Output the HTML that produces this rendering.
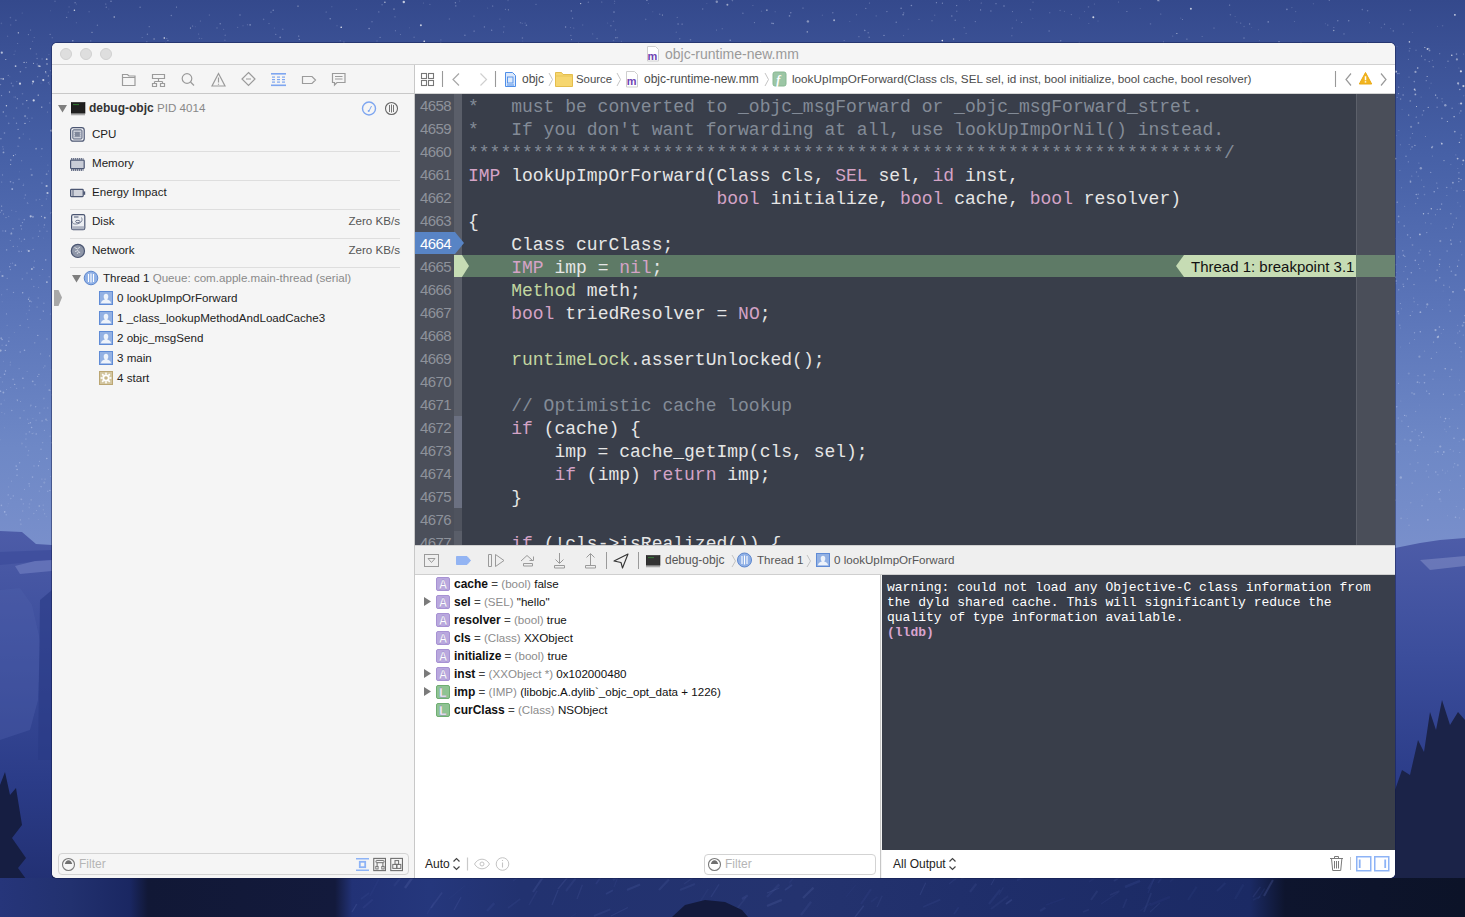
<!DOCTYPE html>
<html><head><meta charset="utf-8">
<style>
*{margin:0;padding:0;box-sizing:border-box}
html,body{width:1465px;height:917px;overflow:hidden}
body{position:relative;font-family:"Liberation Sans",sans-serif;font-size:12px;color:#222;
background:linear-gradient(180deg,#33468a 0px,#374c90 200px,#4a5fa6 400px,#6678bb 540px,#5566ac 600px,#2c3a80 760px,#16204e 917px)}
.abs{position:absolute}
#win{position:absolute;left:52px;top:43px;width:1343px;height:835px;border-radius:5px;overflow:hidden;background:#f5f5f5;box-shadow:0 0 0 1px rgba(15,25,70,0.45)}
#title{position:absolute;left:0;top:0;width:1343px;height:22px;background:#f5f5f5;border-bottom:1px solid #d1d1d1}
.tl{position:absolute;top:5px;width:12px;height:12px;border-radius:6px;background:#dedede;border:1px solid #d0d0d0}
#sidebar{position:absolute;left:0;top:22px;width:363px;height:813px;background:#f5f5f5;border-right:1px solid #c8c8c8}
#navbar{position:absolute;left:0;top:0;width:362px;height:29px;border-bottom:1px solid #c8c8c8}
#jump{position:absolute;left:363px;top:22px;width:980px;height:29px;background:#fff;border-bottom:1px solid #d4d4d4}
#editor{position:absolute;left:363px;top:51px;width:980px;height:451px;background:#393e4a;overflow:hidden}
#gutter{position:absolute;left:0;top:0;width:39px;height:452px;background:#4b4f5a}
#fold{position:absolute;left:39px;top:0;width:8px;height:452px;background:#5a5e69}
#scroll{position:absolute;left:941px;top:0;width:39px;height:452px;background:#4a4e59;border-left:1px solid #5c606a}
.ln{position:absolute;left:0;margin-top:0px;width:36px;text-align:right;font-family:"Liberation Sans",sans-serif;font-size:15px;letter-spacing:-0.6px;color:#8e929b;height:23px;line-height:23px}
.code{position:absolute;left:53px;margin-top:2px;font-family:"Liberation Mono",monospace;font-size:18px;height:23px;line-height:23px;white-space:pre;color:#e6e6e6}
.cm{color:#838b97}.kw{color:#d4a3c6}.ty{color:#c2d6a0}
#dbar{position:absolute;left:363px;top:502px;width:980px;height:30px;background:#efefef;border-top:1px solid #d0d0d0;border-bottom:1px solid #cfcfcf}
#vars{position:absolute;left:363px;top:532px;width:466px;height:303px;background:#fff;border-right:1px solid #c6c6c6}
#console{position:absolute;left:830px;top:532px;width:513px;height:275px;background:#393e4a}
#cbar{position:absolute;left:830px;top:807px;width:513px;height:28px;background:#fff}
.mono13{font-family:"Liberation Mono",monospace;font-size:13px;line-height:15px;color:#fff;white-space:pre}
.sbi{position:absolute;left:40px;font-size:12px;color:#1a1a1a}
.sep{position:absolute;left:18px;width:330px;height:1px;background:#dcdcdc}
</style></head>
<body>
<svg id="wall" class="abs" style="left:0;top:0" width="1465" height="917">
<defs>
<linearGradient id="sky" x1="0" y1="0" x2="0" y2="560" gradientUnits="userSpaceOnUse"><stop offset="0" stop-color="#34498c"/><stop offset="0.08" stop-color="#3a5094"/><stop offset="0.27" stop-color="#4660a6"/><stop offset="0.54" stop-color="#5a74b8"/><stop offset="0.8" stop-color="#6e88c6"/><stop offset="1" stop-color="#7a90cc"/></linearGradient>
<linearGradient id="mtn" x1="0" y1="0" x2="0" y2="1"><stop offset="0" stop-color="#4d5ca8"/><stop offset="0.3" stop-color="#3c4e9c"/><stop offset="0.65" stop-color="#2b3c88"/><stop offset="1" stop-color="#1f2c6c"/></linearGradient>
<linearGradient id="bot" x1="0" y1="0" x2="1465" y2="0" gradientUnits="userSpaceOnUse"><stop offset="0.0000" stop-color="#26357a"/><stop offset="0.0478" stop-color="#22316f"/><stop offset="0.0887" stop-color="#1a2762"/><stop offset="0.1010" stop-color="#111836"/><stop offset="0.2287" stop-color="#131a3c"/><stop offset="0.2403" stop-color="#223276"/><stop offset="0.2935" stop-color="#25377c"/><stop offset="0.3549" stop-color="#223270"/><stop offset="0.5461" stop-color="#24336f"/><stop offset="0.6826" stop-color="#1f2e6a"/><stop offset="0.8532" stop-color="#1b2a64"/><stop offset="0.8771" stop-color="#0e152e"/><stop offset="1.0000" stop-color="#0c1328"/></linearGradient>
</defs>
<rect x="0" y="0" width="1465" height="560" fill="url(#sky)"/>
<polygon points="0,531 22,532 36,544 52,545 52,917 0,917" fill="url(#mtn)"/>
<polygon points="0,552 52,550 52,560 0,565" fill="#3a4a9a" fill-opacity="0.6"/>
<polygon points="0,590 20,588 32,605 40,640 38,700 30,730 0,740" fill="#4d5eab" fill-opacity="0.4"/>
<polygon points="40,600 52,590 52,760 38,760" fill="#2a3a86" fill-opacity="0.6"/>
<polygon points="1395,548 1420,543 1440,540 1465,538 1465,917 1395,917" fill="url(#mtn)"/>
<polygon points="15,566 35,561 52,560 52,571 20,574" fill="#7482c4" fill-opacity="0.6"/>
<polygon points="1420,560 1465,556 1465,566 1430,570" fill="#8a95cc" fill-opacity="0.5"/>
<polygon points="0,785 5,772 10,795 16,788 22,825 12,838 26,858 18,868 34,890 38,917 0,917" fill="#161e42"/>
<polygon points="1395,790 1402,770 1410,775 1418,740 1424,752 1430,712 1436,730 1442,700 1450,725 1458,712 1465,720 1465,917 1395,917" fill="#1b2348"/>
<rect x="0" y="878" width="1465" height="39" fill="url(#bot)"/>
<path d="M923 907l17.3 -7.3" stroke="#3a4a92" stroke-opacity="0.24" stroke-width="1.8"/>
<path d="M1123 908l3.8 -9.2" stroke="#5565a8" stroke-opacity="0.14" stroke-width="1.7"/>
<path d="M577 899l5.4 -14.2" stroke="#5565a8" stroke-opacity="0.19" stroke-width="1.3"/>
<path d="M1148 893l7.3 -16.7" stroke="#3a4a92" stroke-opacity="0.23" stroke-width="1.2"/>
<path d="M352 912l4.8 -8.0" stroke="#5565a8" stroke-opacity="0.28" stroke-width="1.4"/>
<path d="M1235 899l8.5 -14.6" stroke="#3a4a92" stroke-opacity="0.16" stroke-width="2.4"/>
<path d="M703 879l11.6 -5.0" stroke="#4a5aa0" stroke-opacity="0.13" stroke-width="1.5"/>
<path d="M905 878l10.1 -13.5" stroke="#4a5aa0" stroke-opacity="0.19" stroke-width="1.5"/>
<path d="M991 885l6.5 -11.9" stroke="#4a5aa0" stroke-opacity="0.29" stroke-width="1.0"/>
<path d="M1040 911l5.4 -3.2" stroke="#4a5aa0" stroke-opacity="0.19" stroke-width="2.3"/>
<path d="M767 906l14.8 -6.1" stroke="#5565a8" stroke-opacity="0.26" stroke-width="2.4"/>
<path d="M1217 891l8.4 -8.1" stroke="#4a5aa0" stroke-opacity="0.14" stroke-width="2.1"/>
<path d="M1083 912l6.1 -2.5" stroke="#5565a8" stroke-opacity="0.16" stroke-width="1.8"/>
<path d="M684 884l8.5 -6.0" stroke="#5565a8" stroke-opacity="0.17" stroke-width="1.5"/>
<path d="M513 881l6.8 -4.9" stroke="#4a5aa0" stroke-opacity="0.15" stroke-width="1.1"/>
<path d="M1258 899l6.6 -10.6" stroke="#3a4a92" stroke-opacity="0.18" stroke-width="1.4"/>
<path d="M949 884l17.1 -13.4" stroke="#4a5aa0" stroke-opacity="0.18" stroke-width="1.3"/>
<path d="M1253 900l7.4 -3.5" stroke="#4a5aa0" stroke-opacity="0.14" stroke-width="1.7"/>
<path d="M487 911l7.3 -7.9" stroke="#3a4a92" stroke-opacity="0.28" stroke-width="2.5"/>
<path d="M767 897l12.3 -12.7" stroke="#4a5aa0" stroke-opacity="0.20" stroke-width="2.4"/>
<path d="M454 910l7.0 -12.7" stroke="#4a5aa0" stroke-opacity="0.28" stroke-width="1.3"/>
<path d="M803 898l10.5 -10.4" stroke="#5565a8" stroke-opacity="0.26" stroke-width="2.2"/>
<path d="M989 904l11.2 -14.3" stroke="#3a4a92" stroke-opacity="0.24" stroke-width="2.3"/>
<path d="M594 916l16.2 -6.6" stroke="#4a5aa0" stroke-opacity="0.23" stroke-width="1.9"/>
<path d="M361 899l8.1 -5.9" stroke="#4a5aa0" stroke-opacity="0.17" stroke-width="1.8"/>
<path d="M970 892l6.3 -8.3" stroke="#4a5aa0" stroke-opacity="0.19" stroke-width="2.3"/>
<path d="M1150 905l20.0 -8.2" stroke="#3a4a92" stroke-opacity="0.14" stroke-width="2.5"/>
<path d="M533 892l11.0 -16.3" stroke="#5565a8" stroke-opacity="0.25" stroke-width="2.1"/>
<path d="M508 908l12.3 -9.1" stroke="#4a5aa0" stroke-opacity="0.17" stroke-width="1.8"/>
<path d="M1148 889l10.9 -19.0" stroke="#3a4a92" stroke-opacity="0.20" stroke-width="2.0"/>
<path d="M552 905l6.1 -14.9" stroke="#4a5aa0" stroke-opacity="0.29" stroke-width="1.2"/>
<path d="M1170 882l15.0 -15.4" stroke="#3a4a92" stroke-opacity="0.13" stroke-width="1.7"/>
<path d="M700 902l8.2 -13.1" stroke="#4a5aa0" stroke-opacity="0.12" stroke-width="1.6"/>
<path d="M606 894l6.9 -3.7" stroke="#4a5aa0" stroke-opacity="0.29" stroke-width="1.8"/>
<path d="M627 890l13.1 -5.4" stroke="#4a5aa0" stroke-opacity="0.29" stroke-width="2.2"/>
<path d="M736 910l10.1 -12.7" stroke="#5565a8" stroke-opacity="0.15" stroke-width="1.6"/>
<path d="M789 886l3.4 -7.4" stroke="#3a4a92" stroke-opacity="0.12" stroke-width="1.2"/>
<path d="M871 902l6.5 -5.1" stroke="#3a4a92" stroke-opacity="0.19" stroke-width="1.6"/>
<path d="M558 889l13.6 -16.8" stroke="#5565a8" stroke-opacity="0.23" stroke-width="1.4"/>
<path d="M1253 897l7.4 -10.2" stroke="#4a5aa0" stroke-opacity="0.21" stroke-width="1.4"/>
<path d="M789 883l10.7 -11.8" stroke="#4a5aa0" stroke-opacity="0.13" stroke-width="1.2"/>
<path d="M711 897l8.0 -12.7" stroke="#4a5aa0" stroke-opacity="0.26" stroke-width="1.4"/>
<path d="M596 884l12.4 -17.9" stroke="#3a4a92" stroke-opacity="0.30" stroke-width="1.8"/>
<path d="M1144 912l7.2 -19.0" stroke="#5565a8" stroke-opacity="0.17" stroke-width="1.8"/>
<path d="M659 890l9.9 -10.6" stroke="#4a5aa0" stroke-opacity="0.24" stroke-width="2.2"/>
<path d="M472 878l12.1 -8.7" stroke="#5565a8" stroke-opacity="0.28" stroke-width="1.8"/>
<path d="M363 908l9.7 -8.5" stroke="#3a4a92" stroke-opacity="0.29" stroke-width="2.0"/>
<path d="M1140 911l11.0 -8.0" stroke="#3a4a92" stroke-opacity="0.16" stroke-width="1.4"/>
<path d="M1114 881l15.8 -11.2" stroke="#4a5aa0" stroke-opacity="0.22" stroke-width="2.0"/>
<path d="M785 890l7.1 -5.0" stroke="#4a5aa0" stroke-opacity="0.29" stroke-width="1.8"/>
<path d="M742 899l5.7 -3.7" stroke="#4a5aa0" stroke-opacity="0.27" stroke-width="2.2"/>
<path d="M961 879l16.4 -6.3" stroke="#4a5aa0" stroke-opacity="0.25" stroke-width="1.1"/>
<path d="M1125 887l15.1 -6.2" stroke="#3a4a92" stroke-opacity="0.28" stroke-width="2.5"/>
<path d="M999 895l4.4 -7.8" stroke="#5565a8" stroke-opacity="0.13" stroke-width="1.3"/>
<path d="M861 904l10.0 -14.9" stroke="#3a4a92" stroke-opacity="0.22" stroke-width="2.1"/>
<path d="M1158 883l7.5 -10.5" stroke="#3a4a92" stroke-opacity="0.21" stroke-width="1.5"/>
<path d="M954 914l4.7 -6.7" stroke="#3a4a92" stroke-opacity="0.23" stroke-width="1.8"/>
<path d="M1188 900l8.7 -13.3" stroke="#3a4a92" stroke-opacity="0.16" stroke-width="2.2"/>
<path d="M611 916l16.9 -8.5" stroke="#4a5aa0" stroke-opacity="0.25" stroke-width="1.3"/>
<path d="M1006 904l5.9 -4.4" stroke="#5565a8" stroke-opacity="0.28" stroke-width="1.8"/>
<path d="M767 893l12.4 -5.0" stroke="#5565a8" stroke-opacity="0.26" stroke-width="1.0"/>
<path d="M1017 880l7.8 -3.2" stroke="#3a4a92" stroke-opacity="0.26" stroke-width="2.1"/>
<path d="M427 914l7.1 -11.9" stroke="#3a4a92" stroke-opacity="0.23" stroke-width="1.5"/>
<path d="M566 891l9.6 -12.6" stroke="#4a5aa0" stroke-opacity="0.19" stroke-width="2.1"/>
<path d="M680 890l14.9 -6.0" stroke="#4a5aa0" stroke-opacity="0.22" stroke-width="1.9"/>
<path d="M877 907l5.2 -11.2" stroke="#5565a8" stroke-opacity="0.16" stroke-width="1.3"/>
<path d="M801 915l10.1 -13.2" stroke="#4a5aa0" stroke-opacity="0.20" stroke-width="2.3"/>
<path d="M920 895l5.7 -12.2" stroke="#5565a8" stroke-opacity="0.24" stroke-width="1.1"/>
<path d="M1150 912l10.0 -9.1" stroke="#5565a8" stroke-opacity="0.17" stroke-width="1.2"/>
<path d="M614 887l5.0 -12.7" stroke="#4a5aa0" stroke-opacity="0.17" stroke-width="1.1"/>
<path d="M370 896l9.1 -17.3" stroke="#3a4a92" stroke-opacity="0.18" stroke-width="1.7"/>
<path d="M571 917l5.4 -3.7" stroke="#3a4a92" stroke-opacity="0.16" stroke-width="1.1"/>
<path d="M719 916l6.9 -9.6" stroke="#4a5aa0" stroke-opacity="0.19" stroke-width="1.1"/>
<path d="M1264 896l8.9 -16.1" stroke="#5565a8" stroke-opacity="0.29" stroke-width="2.0"/>
<path d="M746 916l2.4 -5.6" stroke="#3a4a92" stroke-opacity="0.19" stroke-width="1.1"/>
<path d="M855 917l8.7 -11.3" stroke="#5565a8" stroke-opacity="0.25" stroke-width="1.4"/>
<path d="M1089 882l11.0 -7.9" stroke="#3a4a92" stroke-opacity="0.13" stroke-width="1.6"/>
<path d="M405 888l7.2 -10.2" stroke="#5565a8" stroke-opacity="0.28" stroke-width="2.4"/>
<path d="M529 905l8.0 -14.2" stroke="#5565a8" stroke-opacity="0.14" stroke-width="1.5"/>
<path d="M449 899l15.9 -13.4" stroke="#3a4a92" stroke-opacity="0.16" stroke-width="1.0"/>
<path d="M846 897l9.5 -11.8" stroke="#3a4a92" stroke-opacity="0.14" stroke-width="1.0"/>
<path d="M1046 905l19.0 -6.9" stroke="#3a4a92" stroke-opacity="0.14" stroke-width="1.5"/>
<path d="M431 908l11.1 -15.5" stroke="#5565a8" stroke-opacity="0.22" stroke-width="1.7"/>
<path d="M991 909l17.2 -12.8" stroke="#4a5aa0" stroke-opacity="0.13" stroke-width="2.1"/>
<path d="M394 886l6.6 -8.3" stroke="#5565a8" stroke-opacity="0.13" stroke-width="2.2"/>
<path d="M699 908l3.4 -5.0" stroke="#5565a8" stroke-opacity="0.22" stroke-width="1.7"/>
<path d="M1101 904l17.7 -11.8" stroke="#3a4a92" stroke-opacity="0.20" stroke-width="1.2"/>
<path d="M1091 900l6.4 -9.1" stroke="#5565a8" stroke-opacity="0.17" stroke-width="2.0"/>
<path d="M613 880l13.5 -12.2" stroke="#5565a8" stroke-opacity="0.14" stroke-width="2.5"/>
<path d="M1110 895l9.4 -3.9" stroke="#5565a8" stroke-opacity="0.16" stroke-width="1.6"/>
<polygon points="672,917 685,905 705,900 725,902 742,910 748,917" fill="#131a3c"/>
<circle cx="953.6" cy="39.1" r="0.8" fill="#fff" fill-opacity="0.38"/><circle cx="807.3" cy="31.9" r="0.8" fill="#fff" fill-opacity="0.40"/><circle cx="92.0" cy="32.2" r="0.5" fill="#fff" fill-opacity="0.62"/><circle cx="1409.4" cy="41.9" r="0.8" fill="#fff" fill-opacity="0.65"/><circle cx="33.1" cy="249.3" r="0.5" fill="#fff" fill-opacity="0.46"/><circle cx="1445.2" cy="368.7" r="0.7" fill="#fff" fill-opacity="0.44"/><circle cx="384.9" cy="2.2" r="0.7" fill="#fff" fill-opacity="0.67"/><circle cx="1399.8" cy="325.2" r="0.7" fill="#fff" fill-opacity="0.23"/><circle cx="33.8" cy="513.5" r="0.8" fill="#fff" fill-opacity="0.15"/><circle cx="1449.8" cy="426.7" r="0.7" fill="#fff" fill-opacity="0.20"/><circle cx="1447.5" cy="515.7" r="0.6" fill="#fff" fill-opacity="0.10"/><circle cx="1443.4" cy="329.5" r="0.5" fill="#fff" fill-opacity="0.34"/><circle cx="1423.5" cy="213.8" r="0.7" fill="#fff" fill-opacity="0.55"/><circle cx="1454.9" cy="14.9" r="0.8" fill="#fff" fill-opacity="0.87"/><circle cx="20.9" cy="524.3" r="1.0" fill="#fff" fill-opacity="0.10"/><circle cx="1445.3" cy="105.2" r="1.2" fill="#fff" fill-opacity="0.40"/><circle cx="766.9" cy="10.1" r="0.7" fill="#fff" fill-opacity="0.80"/><circle cx="662.4" cy="15.0" r="0.5" fill="#fff" fill-opacity="0.60"/><circle cx="1450.2" cy="449.5" r="0.5" fill="#fff" fill-opacity="0.28"/><circle cx="1456.3" cy="218.1" r="0.7" fill="#fff" fill-opacity="0.32"/><circle cx="28.5" cy="299.2" r="0.7" fill="#fff" fill-opacity="0.44"/><circle cx="394.0" cy="9.1" r="0.5" fill="#fff" fill-opacity="0.82"/><circle cx="508.4" cy="9.8" r="0.6" fill="#fff" fill-opacity="0.37"/><circle cx="27.0" cy="273.1" r="0.5" fill="#fff" fill-opacity="0.40"/><circle cx="1438.5" cy="452.0" r="0.5" fill="#fff" fill-opacity="0.14"/><circle cx="1409.0" cy="525.2" r="0.8" fill="#fff" fill-opacity="0.14"/><circle cx="50.5" cy="476.5" r="0.5" fill="#fff" fill-opacity="0.18"/><circle cx="1.6" cy="206.1" r="0.7" fill="#fff" fill-opacity="0.37"/><circle cx="1190.9" cy="8.7" r="1.0" fill="#fff" fill-opacity="0.69"/><circle cx="45.7" cy="71.9" r="0.6" fill="#fff" fill-opacity="0.83"/><circle cx="74.4" cy="10.2" r="0.8" fill="#fff" fill-opacity="0.75"/><circle cx="716.8" cy="1.8" r="1.2" fill="#fff" fill-opacity="0.39"/><circle cx="420.9" cy="25.2" r="1.0" fill="#fff" fill-opacity="0.71"/><circle cx="18.3" cy="32.8" r="0.6" fill="#fff" fill-opacity="0.89"/><circle cx="424.2" cy="41.3" r="0.8" fill="#fff" fill-opacity="0.88"/><circle cx="1395.8" cy="71.6" r="1.2" fill="#fff" fill-opacity="0.65"/><circle cx="17.2" cy="399.6" r="0.6" fill="#fff" fill-opacity="0.25"/><circle cx="1400.8" cy="477.5" r="1.2" fill="#fff" fill-opacity="0.26"/><circle cx="942.3" cy="40.6" r="0.8" fill="#fff" fill-opacity="0.84"/><circle cx="1417.7" cy="68.0" r="0.8" fill="#fff" fill-opacity="0.60"/><circle cx="1418.5" cy="264.5" r="0.5" fill="#fff" fill-opacity="0.36"/><circle cx="807.9" cy="21.4" r="1.2" fill="#fff" fill-opacity="0.41"/><circle cx="834.1" cy="20.3" r="1.0" fill="#fff" fill-opacity="0.52"/><circle cx="164.3" cy="38.0" r="0.8" fill="#fff" fill-opacity="0.87"/><circle cx="1158.1" cy="0.6" r="0.8" fill="#fff" fill-opacity="0.53"/><circle cx="31.9" cy="269.1" r="1.0" fill="#fff" fill-opacity="0.45"/><circle cx="580.7" cy="3.6" r="0.6" fill="#fff" fill-opacity="0.79"/><circle cx="1420.8" cy="168.3" r="1.2" fill="#fff" fill-opacity="0.35"/><circle cx="1333.7" cy="30.5" r="0.8" fill="#fff" fill-opacity="0.42"/><circle cx="1427.1" cy="76.6" r="0.5" fill="#fff" fill-opacity="0.69"/><circle cx="165.8" cy="42.9" r="0.5" fill="#fff" fill-opacity="0.51"/><circle cx="1093.3" cy="17.2" r="1.0" fill="#fff" fill-opacity="0.77"/><circle cx="1176.9" cy="33.5" r="0.5" fill="#fff" fill-opacity="0.76"/><circle cx="403.8" cy="2.0" r="1.2" fill="#fff" fill-opacity="0.71"/><circle cx="727.4" cy="4.7" r="1.0" fill="#fff" fill-opacity="0.53"/><circle cx="154.1" cy="39.0" r="0.8" fill="#fff" fill-opacity="0.38"/><circle cx="1451.8" cy="55.3" r="0.7" fill="#fff" fill-opacity="0.81"/><circle cx="341.2" cy="27.2" r="0.8" fill="#fff" fill-opacity="0.90"/><circle cx="298.0" cy="6.1" r="0.6" fill="#fff" fill-opacity="0.59"/><circle cx="114.2" cy="17.0" r="0.7" fill="#fff" fill-opacity="0.66"/><circle cx="8.6" cy="486.9" r="0.7" fill="#fff" fill-opacity="0.13"/><circle cx="190.4" cy="27.9" r="0.5" fill="#fff" fill-opacity="0.71"/><circle cx="1416.5" cy="106.6" r="0.5" fill="#fff" fill-opacity="0.72"/><circle cx="47.5" cy="193.0" r="1.1" fill="#fff" fill-opacity="0.60"/><circle cx="47.0" cy="338.9" r="0.6" fill="#fff" fill-opacity="0.33"/><circle cx="1438.5" cy="336.2" r="0.6" fill="#fff" fill-opacity="0.38"/><circle cx="11.3" cy="233.7" r="1.1" fill="#fff" fill-opacity="0.25"/><circle cx="7.8" cy="506.0" r="0.6" fill="#fff" fill-opacity="0.07"/><circle cx="1448.0" cy="61.2" r="0.7" fill="#fff" fill-opacity="0.34"/><circle cx="1433.5" cy="342.1" r="0.7" fill="#fff" fill-opacity="0.33"/><circle cx="13.0" cy="228.7" r="0.7" fill="#fff" fill-opacity="0.37"/><circle cx="1.2" cy="338.2" r="0.9" fill="#fff" fill-opacity="0.28"/><circle cx="32.2" cy="433.6" r="0.6" fill="#fff" fill-opacity="0.26"/><circle cx="3.5" cy="214.0" r="0.7" fill="#fff" fill-opacity="0.24"/><circle cx="26.5" cy="62.4" r="0.6" fill="#fff" fill-opacity="0.32"/><circle cx="1449.4" cy="287.0" r="0.5" fill="#fff" fill-opacity="0.42"/><circle cx="1440.7" cy="417.1" r="0.5" fill="#fff" fill-opacity="0.29"/><circle cx="1446.2" cy="431.7" r="0.6" fill="#fff" fill-opacity="0.13"/><circle cx="1415.2" cy="429.8" r="0.6" fill="#fff" fill-opacity="0.24"/><circle cx="1410.5" cy="440.4" r="1.1" fill="#fff" fill-opacity="0.24"/><circle cx="46.6" cy="174.2" r="0.9" fill="#fff" fill-opacity="0.28"/><circle cx="1459.4" cy="142.4" r="0.7" fill="#fff" fill-opacity="0.52"/><circle cx="19.4" cy="137.9" r="0.9" fill="#fff" fill-opacity="0.31"/><circle cx="1442.6" cy="470.1" r="0.6" fill="#fff" fill-opacity="0.21"/><circle cx="39.9" cy="66.2" r="0.7" fill="#fff" fill-opacity="0.79"/><circle cx="27.1" cy="371.5" r="0.5" fill="#fff" fill-opacity="0.19"/><circle cx="1455.0" cy="395.0" r="0.7" fill="#fff" fill-opacity="0.18"/><circle cx="1435.4" cy="214.8" r="0.5" fill="#fff" fill-opacity="0.38"/><circle cx="38.7" cy="66.0" r="1.1" fill="#fff" fill-opacity="0.41"/><circle cx="1463.9" cy="322.5" r="0.7" fill="#fff" fill-opacity="0.37"/><circle cx="1410.5" cy="181.8" r="0.9" fill="#fff" fill-opacity="0.40"/><circle cx="2.5" cy="276.0" r="1.1" fill="#fff" fill-opacity="0.40"/><circle cx="0.1" cy="212.3" r="0.5" fill="#fff" fill-opacity="0.41"/><circle cx="1423.9" cy="186.7" r="0.6" fill="#fff" fill-opacity="0.30"/><circle cx="1428.2" cy="107.3" r="0.6" fill="#fff" fill-opacity="0.60"/><circle cx="3.3" cy="112.0" r="0.7" fill="#fff" fill-opacity="0.45"/><circle cx="0.6" cy="350.6" r="1.1" fill="#fff" fill-opacity="0.38"/><circle cx="1435.5" cy="330.1" r="1.1" fill="#fff" fill-opacity="0.36"/><circle cx="47.0" cy="64.0" r="1.1" fill="#fff" fill-opacity="0.28"/><circle cx="8.3" cy="477.9" r="0.5" fill="#fff" fill-opacity="0.08"/><circle cx="1460.9" cy="110.9" r="0.6" fill="#fff" fill-opacity="0.51"/><circle cx="1440.3" cy="241.1" r="1.1" fill="#fff" fill-opacity="0.25"/><circle cx="15.6" cy="66.1" r="0.9" fill="#fff" fill-opacity="0.66"/><circle cx="43.9" cy="398.5" r="0.9" fill="#fff" fill-opacity="0.13"/><circle cx="1407.3" cy="518.4" r="0.7" fill="#fff" fill-opacity="0.09"/><circle cx="17.4" cy="400.6" r="0.7" fill="#fff" fill-opacity="0.28"/><circle cx="28.8" cy="251.0" r="1.1" fill="#fff" fill-opacity="0.54"/><circle cx="48.3" cy="469.5" r="0.5" fill="#fff" fill-opacity="0.23"/><circle cx="13.5" cy="155.6" r="0.6" fill="#fff" fill-opacity="0.66"/><circle cx="1417.9" cy="462.8" r="0.7" fill="#fff" fill-opacity="0.19"/><circle cx="44.3" cy="482.6" r="1.1" fill="#fff" fill-opacity="0.15"/><circle cx="1443.8" cy="452.0" r="0.9" fill="#fff" fill-opacity="0.27"/><circle cx="46.0" cy="419.4" r="0.9" fill="#fff" fill-opacity="0.24"/><circle cx="47.4" cy="112.0" r="0.5" fill="#fff" fill-opacity="0.30"/><circle cx="1406.3" cy="509.2" r="0.5" fill="#fff" fill-opacity="0.07"/><circle cx="33.5" cy="63.3" r="0.5" fill="#fff" fill-opacity="0.67"/><circle cx="30.7" cy="216.3" r="1.1" fill="#fff" fill-opacity="0.56"/><circle cx="45.1" cy="479.2" r="0.9" fill="#fff" fill-opacity="0.10"/><circle cx="5.8" cy="59.4" r="0.5" fill="#fff" fill-opacity="0.72"/><circle cx="1415.1" cy="90.6" r="0.5" fill="#fff" fill-opacity="0.67"/><circle cx="1415.6" cy="203.5" r="0.7" fill="#fff" fill-opacity="0.21"/><circle cx="14.7" cy="384.4" r="0.7" fill="#fff" fill-opacity="0.35"/><circle cx="1437.1" cy="270.1" r="0.7" fill="#fff" fill-opacity="0.39"/><circle cx="21.5" cy="251.2" r="0.5" fill="#fff" fill-opacity="0.31"/><circle cx="1432.7" cy="146.3" r="0.5" fill="#fff" fill-opacity="0.50"/><circle cx="22.7" cy="292.7" r="0.7" fill="#fff" fill-opacity="0.42"/><circle cx="1395.3" cy="277.1" r="0.9" fill="#fff" fill-opacity="0.41"/><circle cx="1462.7" cy="325.6" r="1.1" fill="#fff" fill-opacity="0.23"/><circle cx="1414.9" cy="145.4" r="0.6" fill="#fff" fill-opacity="0.46"/><circle cx="33.1" cy="81.6" r="1.1" fill="#fff" fill-opacity="0.68"/><circle cx="1419.9" cy="234.4" r="0.9" fill="#fff" fill-opacity="0.53"/><circle cx="1424.5" cy="351.1" r="0.7" fill="#fff" fill-opacity="0.19"/><circle cx="46.9" cy="282.1" r="0.9" fill="#fff" fill-opacity="0.50"/><circle cx="1461.1" cy="103.5" r="1.1" fill="#fff" fill-opacity="0.63"/><circle cx="1440.2" cy="209.2" r="0.7" fill="#fff" fill-opacity="0.42"/><circle cx="1426.5" cy="307.1" r="0.7" fill="#fff" fill-opacity="0.21"/><circle cx="40.2" cy="319.3" r="0.6" fill="#fff" fill-opacity="0.25"/><circle cx="1443.8" cy="285.2" r="0.7" fill="#fff" fill-opacity="0.27"/><circle cx="1454.1" cy="116.7" r="0.6" fill="#fff" fill-opacity="0.73"/><circle cx="1437.2" cy="209.3" r="0.6" fill="#fff" fill-opacity="0.34"/><circle cx="50.7" cy="390.6" r="0.5" fill="#fff" fill-opacity="0.16"/><circle cx="1408.7" cy="115.0" r="0.6" fill="#fff" fill-opacity="0.64"/><circle cx="1425.4" cy="136.6" r="0.5" fill="#fff" fill-opacity="0.37"/><circle cx="1427.5" cy="49.0" r="0.9" fill="#fff" fill-opacity="0.66"/><circle cx="1439.3" cy="264.0" r="0.6" fill="#fff" fill-opacity="0.27"/><circle cx="1395.4" cy="158.6" r="0.9" fill="#fff" fill-opacity="0.54"/><circle cx="1440.3" cy="446.5" r="1.1" fill="#fff" fill-opacity="0.25"/><circle cx="1439.9" cy="259.5" r="0.7" fill="#fff" fill-opacity="0.27"/><circle cx="1457.6" cy="158.6" r="0.9" fill="#fff" fill-opacity="0.55"/><circle cx="1412.5" cy="245.0" r="0.9" fill="#fff" fill-opacity="0.19"/><circle cx="1431.3" cy="358.3" r="0.6" fill="#fff" fill-opacity="0.38"/><circle cx="0.6" cy="439.8" r="0.5" fill="#fff" fill-opacity="0.10"/><circle cx="1406.3" cy="415.9" r="0.6" fill="#fff" fill-opacity="0.22"/><circle cx="29.9" cy="301.1" r="0.9" fill="#fff" fill-opacity="0.33"/><circle cx="1453.0" cy="291.8" r="0.9" fill="#fff" fill-opacity="0.41"/><circle cx="51.5" cy="130.7" r="1.1" fill="#fff" fill-opacity="0.61"/><circle cx="51.2" cy="212.6" r="0.5" fill="#fff" fill-opacity="0.30"/><circle cx="3.2" cy="78.9" r="0.9" fill="#fff" fill-opacity="0.59"/><circle cx="1435.6" cy="95.1" r="0.7" fill="#fff" fill-opacity="0.64"/><circle cx="1431.9" cy="147.4" r="0.9" fill="#fff" fill-opacity="0.45"/><circle cx="48.3" cy="75.9" r="0.6" fill="#fff" fill-opacity="0.51"/><circle cx="1410.8" cy="502.8" r="0.7" fill="#fff" fill-opacity="0.16"/><circle cx="1450.7" cy="240.1" r="0.7" fill="#fff" fill-opacity="0.48"/><circle cx="1449.6" cy="266.9" r="0.6" fill="#fff" fill-opacity="0.27"/><circle cx="13.2" cy="246.3" r="0.6" fill="#fff" fill-opacity="0.37"/><circle cx="1450.9" cy="213.8" r="0.7" fill="#fff" fill-opacity="0.33"/><circle cx="32.4" cy="83.7" r="0.7" fill="#fff" fill-opacity="0.34"/><circle cx="20.0" cy="83.7" r="1.1" fill="#fff" fill-opacity="0.73"/><circle cx="1404.8" cy="439.5" r="1.1" fill="#fff" fill-opacity="0.10"/><circle cx="49.5" cy="355.9" r="0.7" fill="#fff" fill-opacity="0.30"/><circle cx="1454.8" cy="131.6" r="0.9" fill="#fff" fill-opacity="0.41"/><circle cx="47.0" cy="420.6" r="0.6" fill="#fff" fill-opacity="0.23"/><circle cx="1463.4" cy="86.1" r="1.1" fill="#fff" fill-opacity="0.67"/><circle cx="1408.8" cy="373.5" r="1.1" fill="#fff" fill-opacity="0.15"/><circle cx="1442.0" cy="98.8" r="0.5" fill="#fff" fill-opacity="0.39"/><circle cx="7.2" cy="278.2" r="0.5" fill="#fff" fill-opacity="0.34"/><circle cx="1444.0" cy="160.6" r="0.6" fill="#fff" fill-opacity="0.47"/><circle cx="1395.5" cy="444.0" r="0.9" fill="#fff" fill-opacity="0.23"/><circle cx="15.4" cy="265.2" r="0.9" fill="#fff" fill-opacity="0.33"/><circle cx="1400.3" cy="346.9" r="0.5" fill="#fff" fill-opacity="0.15"/><circle cx="38.3" cy="519.5" r="0.5" fill="#fff" fill-opacity="0.12"/><circle cx="46.7" cy="59.2" r="0.9" fill="#fff" fill-opacity="0.61"/><circle cx="44.8" cy="217.7" r="0.9" fill="#fff" fill-opacity="0.51"/><circle cx="1458.9" cy="178.5" r="0.7" fill="#fff" fill-opacity="0.40"/><circle cx="1452.9" cy="182.7" r="0.9" fill="#fff" fill-opacity="0.39"/><circle cx="1414.0" cy="284.6" r="0.6" fill="#fff" fill-opacity="0.39"/><circle cx="1418.2" cy="194.3" r="0.7" fill="#fff" fill-opacity="0.26"/><circle cx="1401.1" cy="518.3" r="0.9" fill="#fff" fill-opacity="0.15"/><circle cx="1433.2" cy="66.7" r="0.7" fill="#fff" fill-opacity="0.33"/><circle cx="42.7" cy="269.6" r="0.5" fill="#fff" fill-opacity="0.45"/><circle cx="1437.8" cy="337.2" r="1.1" fill="#fff" fill-opacity="0.40"/><circle cx="2.1" cy="345.2" r="0.6" fill="#fff" fill-opacity="0.17"/><circle cx="1.9" cy="412.5" r="0.5" fill="#fff" fill-opacity="0.19"/><circle cx="1450.1" cy="311.1" r="0.7" fill="#fff" fill-opacity="0.43"/><circle cx="1.8" cy="52.7" r="1.1" fill="#fff" fill-opacity="0.63"/><circle cx="1398.8" cy="313.7" r="0.5" fill="#fff" fill-opacity="0.41"/><circle cx="1424.5" cy="374.9" r="0.9" fill="#fff" fill-opacity="0.24"/><circle cx="20.1" cy="325.4" r="0.6" fill="#fff" fill-opacity="0.29"/><circle cx="5.3" cy="350.4" r="0.6" fill="#fff" fill-opacity="0.39"/><circle cx="1424.9" cy="47.4" r="0.5" fill="#fff" fill-opacity="0.83"/><circle cx="1410.3" cy="100.9" r="0.9" fill="#fff" fill-opacity="0.26"/><circle cx="1412.0" cy="392.9" r="0.6" fill="#fff" fill-opacity="0.34"/><circle cx="38.9" cy="374.4" r="0.6" fill="#fff" fill-opacity="0.31"/><circle cx="32.7" cy="381.3" r="0.9" fill="#fff" fill-opacity="0.29"/><circle cx="1458.9" cy="68.1" r="0.5" fill="#fff" fill-opacity="0.27"/><circle cx="33.8" cy="432.9" r="0.5" fill="#fff" fill-opacity="0.18"/><circle cx="31.2" cy="499.8" r="0.9" fill="#fff" fill-opacity="0.15"/><circle cx="49.3" cy="390.1" r="0.9" fill="#fff" fill-opacity="0.28"/><circle cx="41.5" cy="216.3" r="0.6" fill="#fff" fill-opacity="0.45"/><circle cx="20.1" cy="418.0" r="0.7" fill="#fff" fill-opacity="0.28"/><circle cx="1415.5" cy="71.9" r="1.1" fill="#fff" fill-opacity="0.44"/><circle cx="1463.4" cy="439.5" r="1.1" fill="#fff" fill-opacity="0.26"/><circle cx="1463.3" cy="160.4" r="0.9" fill="#fff" fill-opacity="0.54"/><circle cx="1457.7" cy="428.2" r="0.7" fill="#fff" fill-opacity="0.24"/><circle cx="13.9" cy="118.0" r="0.5" fill="#fff" fill-opacity="0.39"/><circle cx="46.3" cy="516.6" r="0.6" fill="#fff" fill-opacity="0.10"/><circle cx="1451.5" cy="369.6" r="0.9" fill="#fff" fill-opacity="0.22"/><circle cx="28.8" cy="423.4" r="0.6" fill="#fff" fill-opacity="0.27"/><circle cx="1463.8" cy="190.6" r="0.5" fill="#fff" fill-opacity="0.50"/><circle cx="10.7" cy="164.5" r="0.5" fill="#fff" fill-opacity="0.58"/><circle cx="4.6" cy="427.7" r="0.5" fill="#fff" fill-opacity="0.15"/><circle cx="1457.8" cy="465.2" r="1.1" fill="#fff" fill-opacity="0.14"/><circle cx="1409.1" cy="144.5" r="0.5" fill="#fff" fill-opacity="0.32"/><circle cx="1420.4" cy="312.2" r="0.9" fill="#fff" fill-opacity="0.40"/><circle cx="1412.2" cy="483.1" r="0.9" fill="#fff" fill-opacity="0.13"/><circle cx="32.9" cy="418.6" r="0.6" fill="#fff" fill-opacity="0.17"/><circle cx="14.6" cy="332.6" r="0.5" fill="#fff" fill-opacity="0.16"/><circle cx="1455.6" cy="275.0" r="1.1" fill="#fff" fill-opacity="0.25"/><circle cx="1414.6" cy="89.3" r="0.9" fill="#fff" fill-opacity="0.66"/><circle cx="1462.4" cy="164.2" r="0.5" fill="#fff" fill-opacity="0.38"/><circle cx="1421.5" cy="56.1" r="0.5" fill="#fff" fill-opacity="0.58"/><circle cx="1427.1" cy="494.8" r="0.5" fill="#fff" fill-opacity="0.20"/><circle cx="1459.6" cy="379.9" r="0.5" fill="#fff" fill-opacity="0.19"/><circle cx="1439.8" cy="499.2" r="1.1" fill="#fff" fill-opacity="0.12"/><circle cx="8.3" cy="503.7" r="0.6" fill="#fff" fill-opacity="0.09"/><circle cx="1460.9" cy="71.3" r="1.1" fill="#fff" fill-opacity="0.75"/><circle cx="1398.3" cy="418.1" r="0.9" fill="#fff" fill-opacity="0.12"/><circle cx="39.3" cy="491.1" r="0.7" fill="#fff" fill-opacity="0.16"/><circle cx="33.9" cy="267.5" r="0.7" fill="#fff" fill-opacity="0.27"/><circle cx="25.0" cy="123.4" r="0.6" fill="#fff" fill-opacity="0.64"/><circle cx="1457.5" cy="266.2" r="0.6" fill="#fff" fill-opacity="0.46"/><circle cx="43.3" cy="80.1" r="1.1" fill="#fff" fill-opacity="0.72"/><circle cx="1404.8" cy="256.3" r="0.5" fill="#fff" fill-opacity="0.52"/><circle cx="1.1" cy="78.8" r="0.7" fill="#fff" fill-opacity="0.43"/><circle cx="6.0" cy="217.6" r="0.7" fill="#fff" fill-opacity="0.29"/><circle cx="37.1" cy="307.0" r="0.6" fill="#fff" fill-opacity="0.30"/><circle cx="21.7" cy="160.7" r="0.5" fill="#fff" fill-opacity="0.35"/><circle cx="1418.4" cy="123.0" r="0.9" fill="#fff" fill-opacity="0.30"/><circle cx="25.1" cy="116.2" r="1.1" fill="#fff" fill-opacity="0.27"/><circle cx="1441.8" cy="143.7" r="0.9" fill="#fff" fill-opacity="0.62"/><circle cx="39.3" cy="506.0" r="0.9" fill="#fff" fill-opacity="0.20"/><circle cx="1459.8" cy="89.5" r="0.7" fill="#fff" fill-opacity="0.47"/><circle cx="43.3" cy="509.8" r="0.6" fill="#fff" fill-opacity="0.19"/><circle cx="42.0" cy="205.6" r="0.6" fill="#fff" fill-opacity="0.39"/><circle cx="1461.1" cy="179.6" r="0.7" fill="#fff" fill-opacity="0.41"/><circle cx="1410.3" cy="315.5" r="0.6" fill="#fff" fill-opacity="0.41"/><circle cx="1411.1" cy="126.8" r="1.1" fill="#fff" fill-opacity="0.28"/><circle cx="31.6" cy="279.3" r="0.7" fill="#fff" fill-opacity="0.23"/><circle cx="34.8" cy="342.8" r="0.6" fill="#fff" fill-opacity="0.31"/><circle cx="3.4" cy="392.5" r="0.9" fill="#fff" fill-opacity="0.32"/><circle cx="1431.3" cy="208.8" r="0.7" fill="#fff" fill-opacity="0.55"/><circle cx="1429.5" cy="50.4" r="0.9" fill="#fff" fill-opacity="0.35"/><circle cx="1412.4" cy="311.6" r="0.7" fill="#fff" fill-opacity="0.17"/><circle cx="1435.2" cy="452.3" r="0.7" fill="#fff" fill-opacity="0.19"/><circle cx="26.8" cy="100.6" r="0.6" fill="#fff" fill-opacity="0.67"/><circle cx="1417.5" cy="382.2" r="0.9" fill="#fff" fill-opacity="0.27"/><circle cx="1415.4" cy="94.4" r="0.9" fill="#fff" fill-opacity="0.49"/><circle cx="41.8" cy="107.1" r="0.6" fill="#fff" fill-opacity="0.74"/><circle cx="9.5" cy="92.0" r="0.7" fill="#fff" fill-opacity="0.54"/><circle cx="1396.4" cy="484.9" r="0.6" fill="#fff" fill-opacity="0.12"/><circle cx="1439.6" cy="264.3" r="0.6" fill="#fff" fill-opacity="0.43"/><circle cx="45.2" cy="385.1" r="0.5" fill="#fff" fill-opacity="0.19"/><circle cx="30.5" cy="406.2" r="0.5" fill="#fff" fill-opacity="0.14"/><circle cx="7.1" cy="325.3" r="0.6" fill="#fff" fill-opacity="0.19"/><circle cx="1447.3" cy="121.4" r="0.5" fill="#fff" fill-opacity="0.70"/><circle cx="21.9" cy="443.5" r="1.1" fill="#fff" fill-opacity="0.10"/><circle cx="1398.6" cy="216.3" r="0.9" fill="#fff" fill-opacity="0.30"/><circle cx="22.7" cy="511.0" r="0.7" fill="#fff" fill-opacity="0.17"/><circle cx="1398.7" cy="289.8" r="0.7" fill="#fff" fill-opacity="0.25"/><circle cx="32.9" cy="216.8" r="1.1" fill="#fff" fill-opacity="0.27"/><circle cx="10.4" cy="362.2" r="0.6" fill="#fff" fill-opacity="0.17"/><circle cx="1449.4" cy="489.9" r="0.5" fill="#fff" fill-opacity="0.19"/><circle cx="1456.9" cy="59.4" r="1.1" fill="#fff" fill-opacity="0.42"/><circle cx="1414.1" cy="301.7" r="0.5" fill="#fff" fill-opacity="0.36"/><circle cx="27.1" cy="249.9" r="0.5" fill="#fff" fill-opacity="0.29"/><circle cx="33.7" cy="100.4" r="1.1" fill="#fff" fill-opacity="0.74"/><circle cx="1458.1" cy="83.3" r="1.1" fill="#fff" fill-opacity="0.54"/><circle cx="6.4" cy="105.7" r="0.7" fill="#fff" fill-opacity="0.71"/><circle cx="1414.2" cy="394.0" r="1.1" fill="#fff" fill-opacity="0.19"/><circle cx="36.1" cy="148.7" r="0.9" fill="#fff" fill-opacity="0.32"/><circle cx="1427.3" cy="304.4" r="1.1" fill="#fff" fill-opacity="0.31"/><circle cx="1397.2" cy="202.2" r="0.6" fill="#fff" fill-opacity="0.42"/><circle cx="30.5" cy="48.7" r="0.7" fill="#fff" fill-opacity="0.37"/><circle cx="1417.7" cy="198.3" r="0.7" fill="#fff" fill-opacity="0.33"/><circle cx="1415.7" cy="411.3" r="0.6" fill="#fff" fill-opacity="0.23"/><circle cx="1419.4" cy="356.7" r="1.1" fill="#fff" fill-opacity="0.24"/><circle cx="38.2" cy="95.1" r="0.6" fill="#fff" fill-opacity="0.76"/><circle cx="1460.4" cy="241.8" r="0.7" fill="#fff" fill-opacity="0.24"/><circle cx="31.8" cy="175.0" r="1.1" fill="#fff" fill-opacity="0.26"/><circle cx="1459.5" cy="517.9" r="0.7" fill="#fff" fill-opacity="0.16"/><circle cx="1459.0" cy="103.7" r="0.5" fill="#fff" fill-opacity="0.25"/><circle cx="1436.0" cy="280.5" r="1.1" fill="#fff" fill-opacity="0.22"/><circle cx="1414.6" cy="339.4" r="0.5" fill="#fff" fill-opacity="0.25"/><circle cx="23.8" cy="387.9" r="0.7" fill="#fff" fill-opacity="0.21"/><circle cx="1436.7" cy="352.2" r="0.5" fill="#fff" fill-opacity="0.35"/><circle cx="1430.0" cy="254.8" r="0.6" fill="#fff" fill-opacity="0.38"/><circle cx="1425.5" cy="222.8" r="0.6" fill="#fff" fill-opacity="0.23"/><circle cx="1417.7" cy="445.3" r="0.6" fill="#fff" fill-opacity="0.28"/><circle cx="22.2" cy="477.3" r="0.5" fill="#fff" fill-opacity="0.08"/><circle cx="46.6" cy="186.0" r="1.1" fill="#fff" fill-opacity="0.55"/><circle cx="1464.9" cy="289.8" r="1.1" fill="#fff" fill-opacity="0.41"/><circle cx="24.1" cy="62.4" r="0.7" fill="#fff" fill-opacity="0.52"/><circle cx="3.5" cy="152.4" r="0.9" fill="#fff" fill-opacity="0.40"/>
<circle cx="29.1" cy="483.8" r="0.8" fill="#dfe6ff" fill-opacity="0.29"/><circle cx="1408.3" cy="426.5" r="0.8" fill="#dfe6ff" fill-opacity="0.34"/><circle cx="1401.6" cy="187.7" r="0.5" fill="#dfe6ff" fill-opacity="0.31"/><circle cx="1439.4" cy="327.0" r="0.8" fill="#dfe6ff" fill-opacity="0.44"/><circle cx="32.0" cy="118.1" r="0.5" fill="#dfe6ff" fill-opacity="0.40"/><circle cx="52.2" cy="37.8" r="0.5" fill="#dfe6ff" fill-opacity="0.38"/><circle cx="865.8" cy="8.4" r="0.6" fill="#dfe6ff" fill-opacity="0.34"/><circle cx="34.4" cy="261.1" r="0.7" fill="#dfe6ff" fill-opacity="0.27"/><circle cx="48.4" cy="82.7" r="0.7" fill="#dfe6ff" fill-opacity="0.24"/><circle cx="423.4" cy="3.0" r="0.5" fill="#dfe6ff" fill-opacity="0.27"/><circle cx="1422.1" cy="500.0" r="0.5" fill="#dfe6ff" fill-opacity="0.21"/><circle cx="1398.7" cy="222.1" r="0.8" fill="#dfe6ff" fill-opacity="0.28"/><circle cx="10.3" cy="364.9" r="0.7" fill="#dfe6ff" fill-opacity="0.18"/><circle cx="1412.4" cy="32.6" r="0.5" fill="#dfe6ff" fill-opacity="0.19"/><circle cx="1395.8" cy="264.8" r="0.8" fill="#dfe6ff" fill-opacity="0.20"/><circle cx="23.3" cy="134.0" r="0.6" fill="#dfe6ff" fill-opacity="0.28"/><circle cx="578.5" cy="42.6" r="0.5" fill="#dfe6ff" fill-opacity="0.23"/><circle cx="1451.2" cy="188.1" r="0.5" fill="#dfe6ff" fill-opacity="0.21"/><circle cx="1251.7" cy="27.6" r="0.5" fill="#dfe6ff" fill-opacity="0.16"/><circle cx="646.9" cy="0.4" r="0.7" fill="#dfe6ff" fill-opacity="0.40"/><circle cx="108.8" cy="9.0" r="0.6" fill="#dfe6ff" fill-opacity="0.15"/><circle cx="911.4" cy="5.5" r="0.8" fill="#dfe6ff" fill-opacity="0.40"/><circle cx="565.6" cy="27.0" r="0.7" fill="#dfe6ff" fill-opacity="0.42"/><circle cx="1412.5" cy="133.5" r="0.6" fill="#dfe6ff" fill-opacity="0.36"/><circle cx="706.9" cy="3.4" r="0.5" fill="#dfe6ff" fill-opacity="0.18"/><circle cx="1410.3" cy="10.3" r="0.8" fill="#dfe6ff" fill-opacity="0.23"/><circle cx="1436.8" cy="183.0" r="0.6" fill="#dfe6ff" fill-opacity="0.43"/><circle cx="1403.8" cy="271.6" r="0.5" fill="#dfe6ff" fill-opacity="0.23"/><circle cx="1409.3" cy="50.9" r="0.7" fill="#dfe6ff" fill-opacity="0.27"/><circle cx="68.3" cy="12.1" r="0.6" fill="#dfe6ff" fill-opacity="0.18"/><circle cx="659.8" cy="14.2" r="0.6" fill="#dfe6ff" fill-opacity="0.33"/><circle cx="1428.2" cy="213.5" r="0.7" fill="#dfe6ff" fill-opacity="0.44"/><circle cx="932.0" cy="20.7" r="0.7" fill="#dfe6ff" fill-opacity="0.25"/><circle cx="1400.3" cy="303.5" r="0.5" fill="#dfe6ff" fill-opacity="0.42"/><circle cx="1444.3" cy="421.4" r="0.7" fill="#dfe6ff" fill-opacity="0.26"/><circle cx="46.8" cy="458.5" r="0.8" fill="#dfe6ff" fill-opacity="0.43"/><circle cx="732.4" cy="0.6" r="0.8" fill="#dfe6ff" fill-opacity="0.26"/><circle cx="105.8" cy="3.9" r="0.5" fill="#dfe6ff" fill-opacity="0.45"/><circle cx="1446.0" cy="228.3" r="0.8" fill="#dfe6ff" fill-opacity="0.28"/><circle cx="1400.9" cy="400.9" r="0.5" fill="#dfe6ff" fill-opacity="0.24"/><circle cx="32.7" cy="41.2" r="0.5" fill="#dfe6ff" fill-opacity="0.30"/><circle cx="47.9" cy="165.0" r="0.5" fill="#dfe6ff" fill-opacity="0.26"/><circle cx="896.2" cy="22.3" r="0.7" fill="#dfe6ff" fill-opacity="0.35"/><circle cx="46.4" cy="199.0" r="0.7" fill="#dfe6ff" fill-opacity="0.21"/><circle cx="41.9" cy="479.1" r="0.6" fill="#dfe6ff" fill-opacity="0.27"/><circle cx="16.5" cy="108.0" r="0.8" fill="#dfe6ff" fill-opacity="0.26"/><circle cx="1397.8" cy="73.6" r="0.7" fill="#dfe6ff" fill-opacity="0.40"/><circle cx="690.5" cy="39.8" r="0.8" fill="#dfe6ff" fill-opacity="0.26"/><circle cx="35.0" cy="384.7" r="0.8" fill="#dfe6ff" fill-opacity="0.25"/><circle cx="1414.5" cy="332.8" r="0.7" fill="#dfe6ff" fill-opacity="0.32"/><circle cx="1159.6" cy="0.8" r="0.6" fill="#dfe6ff" fill-opacity="0.27"/><circle cx="1126.9" cy="11.5" r="0.6" fill="#dfe6ff" fill-opacity="0.39"/><circle cx="1403.1" cy="95.0" r="0.7" fill="#dfe6ff" fill-opacity="0.44"/><circle cx="10.4" cy="269.6" r="0.6" fill="#dfe6ff" fill-opacity="0.36"/><circle cx="1432.4" cy="60.3" r="0.6" fill="#dfe6ff" fill-opacity="0.23"/><circle cx="1021.6" cy="22.4" r="0.6" fill="#dfe6ff" fill-opacity="0.27"/><circle cx="1458.4" cy="84.6" r="0.8" fill="#dfe6ff" fill-opacity="0.19"/><circle cx="32.5" cy="477.1" r="0.8" fill="#dfe6ff" fill-opacity="0.32"/><circle cx="26.1" cy="433.9" r="0.7" fill="#dfe6ff" fill-opacity="0.29"/><circle cx="10.7" cy="387.4" r="0.5" fill="#dfe6ff" fill-opacity="0.21"/><circle cx="1463.6" cy="509.2" r="0.7" fill="#dfe6ff" fill-opacity="0.23"/><circle cx="1396.1" cy="283.8" r="0.5" fill="#dfe6ff" fill-opacity="0.28"/><circle cx="39.9" cy="275.5" r="0.5" fill="#dfe6ff" fill-opacity="0.22"/><circle cx="1425.0" cy="59.7" r="0.7" fill="#dfe6ff" fill-opacity="0.36"/><circle cx="1427.9" cy="519.9" r="0.8" fill="#dfe6ff" fill-opacity="0.43"/><circle cx="49.4" cy="84.0" r="0.6" fill="#dfe6ff" fill-opacity="0.28"/><circle cx="43.2" cy="310.9" r="0.6" fill="#dfe6ff" fill-opacity="0.31"/><circle cx="1434.2" cy="191.7" r="0.8" fill="#dfe6ff" fill-opacity="0.44"/><circle cx="1437.7" cy="188.2" r="0.6" fill="#dfe6ff" fill-opacity="0.44"/><circle cx="29.8" cy="138.9" r="0.5" fill="#dfe6ff" fill-opacity="0.30"/><circle cx="1.4" cy="505.4" r="0.8" fill="#dfe6ff" fill-opacity="0.31"/><circle cx="1403.5" cy="87.5" r="0.6" fill="#dfe6ff" fill-opacity="0.17"/><circle cx="21.5" cy="499.4" r="0.8" fill="#dfe6ff" fill-opacity="0.23"/><circle cx="6.6" cy="249.9" r="0.8" fill="#dfe6ff" fill-opacity="0.31"/><circle cx="614.6" cy="1.3" r="0.7" fill="#dfe6ff" fill-opacity="0.19"/><circle cx="1396.6" cy="135.6" r="0.6" fill="#dfe6ff" fill-opacity="0.15"/><circle cx="1060.1" cy="10.5" r="0.8" fill="#dfe6ff" fill-opacity="0.18"/><circle cx="1403.6" cy="286.5" r="0.7" fill="#dfe6ff" fill-opacity="0.37"/><circle cx="1456.5" cy="54.1" r="0.8" fill="#dfe6ff" fill-opacity="0.40"/><circle cx="28.0" cy="455.1" r="0.6" fill="#dfe6ff" fill-opacity="0.31"/><circle cx="1437.8" cy="451.7" r="0.6" fill="#dfe6ff" fill-opacity="0.42"/><circle cx="18.1" cy="129.4" r="0.7" fill="#dfe6ff" fill-opacity="0.42"/><circle cx="1140.2" cy="8.4" r="0.5" fill="#dfe6ff" fill-opacity="0.19"/><circle cx="1064.4" cy="11.2" r="0.5" fill="#dfe6ff" fill-opacity="0.28"/><circle cx="1433.0" cy="379.2" r="0.6" fill="#dfe6ff" fill-opacity="0.27"/><circle cx="0.9" cy="138.8" r="0.7" fill="#dfe6ff" fill-opacity="0.42"/><circle cx="1403.1" cy="284.2" r="0.7" fill="#dfe6ff" fill-opacity="0.30"/><circle cx="9.8" cy="76.7" r="0.5" fill="#dfe6ff" fill-opacity="0.16"/><circle cx="1437.9" cy="474.7" r="0.8" fill="#dfe6ff" fill-opacity="0.19"/><circle cx="298.7" cy="36.1" r="0.7" fill="#dfe6ff" fill-opacity="0.43"/><circle cx="90.7" cy="40.9" r="0.8" fill="#dfe6ff" fill-opacity="0.17"/><circle cx="572.6" cy="18.3" r="0.7" fill="#dfe6ff" fill-opacity="0.28"/><circle cx="0.7" cy="377.4" r="0.6" fill="#dfe6ff" fill-opacity="0.20"/><circle cx="38.4" cy="236.3" r="0.6" fill="#dfe6ff" fill-opacity="0.33"/><circle cx="1160.8" cy="13.9" r="0.5" fill="#dfe6ff" fill-opacity="0.39"/><circle cx="1455.3" cy="343.2" r="0.8" fill="#dfe6ff" fill-opacity="0.32"/><circle cx="856.5" cy="14.7" r="0.7" fill="#dfe6ff" fill-opacity="0.23"/><circle cx="1088.5" cy="6.9" r="0.8" fill="#dfe6ff" fill-opacity="0.19"/><circle cx="789.5" cy="15.9" r="0.8" fill="#dfe6ff" fill-opacity="0.38"/><circle cx="37.6" cy="76.7" r="0.7" fill="#dfe6ff" fill-opacity="0.24"/><circle cx="1301.0" cy="42.6" r="0.5" fill="#dfe6ff" fill-opacity="0.22"/><circle cx="1441.6" cy="204.1" r="0.8" fill="#dfe6ff" fill-opacity="0.32"/><circle cx="20.3" cy="519.9" r="0.6" fill="#dfe6ff" fill-opacity="0.36"/><circle cx="1463.6" cy="53.9" r="0.5" fill="#dfe6ff" fill-opacity="0.37"/><circle cx="588.3" cy="2.2" r="0.6" fill="#dfe6ff" fill-opacity="0.34"/><circle cx="378.8" cy="11.9" r="0.7" fill="#dfe6ff" fill-opacity="0.32"/><circle cx="50.3" cy="313.9" r="0.5" fill="#dfe6ff" fill-opacity="0.34"/><circle cx="1400.3" cy="328.0" r="0.5" fill="#dfe6ff" fill-opacity="0.27"/><circle cx="1422.0" cy="505.7" r="0.8" fill="#dfe6ff" fill-opacity="0.31"/><circle cx="22.3" cy="278.9" r="0.7" fill="#dfe6ff" fill-opacity="0.31"/><circle cx="19.0" cy="179.3" r="0.7" fill="#dfe6ff" fill-opacity="0.32"/><circle cx="1049.8" cy="12.7" r="0.5" fill="#dfe6ff" fill-opacity="0.38"/><circle cx="32.9" cy="238.0" r="0.8" fill="#dfe6ff" fill-opacity="0.17"/><circle cx="582.7" cy="25.0" r="0.7" fill="#dfe6ff" fill-opacity="0.17"/><circle cx="1425.1" cy="270.8" r="0.6" fill="#dfe6ff" fill-opacity="0.16"/><circle cx="1186.9" cy="39.1" r="0.6" fill="#dfe6ff" fill-opacity="0.44"/><circle cx="1437.3" cy="97.9" r="0.8" fill="#dfe6ff" fill-opacity="0.29"/><circle cx="76.3" cy="22.7" r="0.5" fill="#dfe6ff" fill-opacity="0.26"/><circle cx="610.9" cy="25.8" r="0.8" fill="#dfe6ff" fill-opacity="0.26"/><circle cx="1452.1" cy="108.3" r="0.7" fill="#dfe6ff" fill-opacity="0.37"/><circle cx="166.8" cy="38.4" r="0.7" fill="#dfe6ff" fill-opacity="0.23"/><circle cx="37.7" cy="376.4" r="0.6" fill="#dfe6ff" fill-opacity="0.34"/><circle cx="1408.3" cy="161.8" r="0.6" fill="#dfe6ff" fill-opacity="0.41"/><circle cx="89.1" cy="11.7" r="0.8" fill="#dfe6ff" fill-opacity="0.16"/><circle cx="326.1" cy="12.0" r="0.5" fill="#dfe6ff" fill-opacity="0.42"/><circle cx="343.9" cy="42.2" r="0.8" fill="#dfe6ff" fill-opacity="0.29"/><circle cx="503.5" cy="32.0" r="0.5" fill="#dfe6ff" fill-opacity="0.39"/><circle cx="42.7" cy="442.7" r="0.6" fill="#dfe6ff" fill-opacity="0.28"/><circle cx="1422.3" cy="114.9" r="0.6" fill="#dfe6ff" fill-opacity="0.35"/><circle cx="1417.8" cy="304.7" r="0.6" fill="#dfe6ff" fill-opacity="0.28"/><circle cx="142.1" cy="37.6" r="0.5" fill="#dfe6ff" fill-opacity="0.31"/><circle cx="29.5" cy="431.9" r="0.8" fill="#dfe6ff" fill-opacity="0.24"/><circle cx="1400.3" cy="144.7" r="0.5" fill="#dfe6ff" fill-opacity="0.36"/><circle cx="39.7" cy="199.4" r="0.6" fill="#dfe6ff" fill-opacity="0.22"/><circle cx="17.0" cy="475.3" r="0.7" fill="#dfe6ff" fill-opacity="0.36"/><circle cx="47.8" cy="491.3" r="0.7" fill="#dfe6ff" fill-opacity="0.28"/><circle cx="1416.3" cy="194.5" r="0.8" fill="#dfe6ff" fill-opacity="0.44"/><circle cx="1431.1" cy="83.2" r="0.7" fill="#dfe6ff" fill-opacity="0.16"/><circle cx="30.4" cy="422.8" r="0.7" fill="#dfe6ff" fill-opacity="0.39"/><circle cx="43.5" cy="311.4" r="0.6" fill="#dfe6ff" fill-opacity="0.18"/><circle cx="44.4" cy="430.3" r="0.6" fill="#dfe6ff" fill-opacity="0.30"/><circle cx="29.5" cy="504.0" r="0.8" fill="#dfe6ff" fill-opacity="0.17"/><circle cx="41.0" cy="83.1" r="0.5" fill="#dfe6ff" fill-opacity="0.23"/><circle cx="459.7" cy="1.1" r="0.6" fill="#dfe6ff" fill-opacity="0.18"/><circle cx="1424.5" cy="382.7" r="0.8" fill="#dfe6ff" fill-opacity="0.38"/><circle cx="39.8" cy="231.1" r="0.7" fill="#dfe6ff" fill-opacity="0.39"/><circle cx="200.3" cy="21.0" r="0.5" fill="#dfe6ff" fill-opacity="0.36"/><circle cx="1423.7" cy="437.1" r="0.7" fill="#dfe6ff" fill-opacity="0.41"/><circle cx="1453.4" cy="466.9" r="0.5" fill="#dfe6ff" fill-opacity="0.31"/><circle cx="1451.2" cy="244.1" r="0.8" fill="#dfe6ff" fill-opacity="0.42"/><circle cx="237.7" cy="27.3" r="0.6" fill="#dfe6ff" fill-opacity="0.25"/><circle cx="775.1" cy="11.8" r="0.5" fill="#dfe6ff" fill-opacity="0.29"/><circle cx="1416.2" cy="117.2" r="0.6" fill="#dfe6ff" fill-opacity="0.42"/><circle cx="1396.2" cy="272.5" r="0.5" fill="#dfe6ff" fill-opacity="0.24"/><circle cx="526.4" cy="25.3" r="0.8" fill="#dfe6ff" fill-opacity="0.33"/><circle cx="271.0" cy="12.1" r="0.6" fill="#dfe6ff" fill-opacity="0.42"/><circle cx="1438.9" cy="492.3" r="0.8" fill="#dfe6ff" fill-opacity="0.41"/><circle cx="20.9" cy="498.9" r="0.5" fill="#dfe6ff" fill-opacity="0.29"/><circle cx="72.8" cy="40.7" r="0.8" fill="#dfe6ff" fill-opacity="0.44"/><circle cx="1449.2" cy="418.7" r="0.5" fill="#dfe6ff" fill-opacity="0.35"/><circle cx="15.9" cy="20.3" r="0.7" fill="#dfe6ff" fill-opacity="0.29"/><circle cx="617.4" cy="37.6" r="0.8" fill="#dfe6ff" fill-opacity="0.20"/><circle cx="380.1" cy="37.4" r="0.6" fill="#dfe6ff" fill-opacity="0.34"/><circle cx="1413.7" cy="298.0" r="0.6" fill="#dfe6ff" fill-opacity="0.32"/><circle cx="299.3" cy="39.4" r="0.6" fill="#dfe6ff" fill-opacity="0.40"/><circle cx="395.4" cy="30.8" r="0.5" fill="#dfe6ff" fill-opacity="0.42"/><circle cx="4.3" cy="400.1" r="0.7" fill="#dfe6ff" fill-opacity="0.16"/><circle cx="282.8" cy="29.3" r="0.8" fill="#dfe6ff" fill-opacity="0.21"/><circle cx="27.3" cy="118.2" r="0.7" fill="#dfe6ff" fill-opacity="0.24"/><circle cx="28.9" cy="518.7" r="0.5" fill="#dfe6ff" fill-opacity="0.26"/><circle cx="5.5" cy="231.1" r="0.8" fill="#dfe6ff" fill-opacity="0.37"/><circle cx="1403.5" cy="255.4" r="0.8" fill="#dfe6ff" fill-opacity="0.36"/><circle cx="15.3" cy="97.1" r="0.5" fill="#dfe6ff" fill-opacity="0.41"/><circle cx="1445.3" cy="473.0" r="0.6" fill="#dfe6ff" fill-opacity="0.24"/><circle cx="790.8" cy="12.8" r="0.7" fill="#dfe6ff" fill-opacity="0.38"/><circle cx="4.5" cy="133.0" r="0.8" fill="#dfe6ff" fill-opacity="0.37"/><circle cx="1384.5" cy="24.2" r="0.7" fill="#dfe6ff" fill-opacity="0.28"/><circle cx="149.2" cy="26.7" r="0.6" fill="#dfe6ff" fill-opacity="0.35"/><circle cx="1407.6" cy="234.9" r="0.8" fill="#dfe6ff" fill-opacity="0.33"/><circle cx="331.9" cy="6.8" r="0.5" fill="#dfe6ff" fill-opacity="0.28"/><circle cx="1418.9" cy="435.7" r="0.6" fill="#dfe6ff" fill-opacity="0.34"/><circle cx="1452.5" cy="227.1" r="0.7" fill="#dfe6ff" fill-opacity="0.43"/><circle cx="37.8" cy="335.4" r="0.7" fill="#dfe6ff" fill-opacity="0.44"/><circle cx="1441.2" cy="333.3" r="0.5" fill="#dfe6ff" fill-opacity="0.23"/><circle cx="449.4" cy="19.0" r="0.8" fill="#dfe6ff" fill-opacity="0.21"/><circle cx="429.9" cy="4.4" r="0.6" fill="#dfe6ff" fill-opacity="0.23"/><circle cx="15.5" cy="154.6" r="0.6" fill="#dfe6ff" fill-opacity="0.32"/><circle cx="1367.6" cy="42.9" r="0.6" fill="#dfe6ff" fill-opacity="0.32"/><circle cx="966.1" cy="33.4" r="0.6" fill="#dfe6ff" fill-opacity="0.22"/><circle cx="36.2" cy="200.0" r="0.7" fill="#dfe6ff" fill-opacity="0.23"/><circle cx="1426.7" cy="391.1" r="0.6" fill="#dfe6ff" fill-opacity="0.42"/><circle cx="29.2" cy="310.3" r="0.7" fill="#dfe6ff" fill-opacity="0.20"/><circle cx="1457.8" cy="202.7" r="0.6" fill="#dfe6ff" fill-opacity="0.19"/><circle cx="1415.2" cy="470.9" r="0.6" fill="#dfe6ff" fill-opacity="0.38"/><circle cx="243.0" cy="25.7" r="0.5" fill="#dfe6ff" fill-opacity="0.29"/><circle cx="40.7" cy="486.6" r="0.6" fill="#dfe6ff" fill-opacity="0.24"/><circle cx="38.4" cy="225.0" r="0.5" fill="#dfe6ff" fill-opacity="0.20"/><circle cx="1.7" cy="294.8" r="0.5" fill="#dfe6ff" fill-opacity="0.32"/><circle cx="761.5" cy="11.3" r="0.7" fill="#dfe6ff" fill-opacity="0.17"/><circle cx="1445.5" cy="418.6" r="0.8" fill="#dfe6ff" fill-opacity="0.44"/><circle cx="24.4" cy="239.2" r="0.8" fill="#dfe6ff" fill-opacity="0.38"/><circle cx="51.7" cy="442.8" r="0.8" fill="#dfe6ff" fill-opacity="0.40"/><circle cx="167.9" cy="40.4" r="0.7" fill="#dfe6ff" fill-opacity="0.31"/><circle cx="47.0" cy="196.0" r="0.5" fill="#dfe6ff" fill-opacity="0.24"/><circle cx="22.5" cy="222.6" r="0.7" fill="#dfe6ff" fill-opacity="0.38"/><circle cx="869.4" cy="3.0" r="0.5" fill="#dfe6ff" fill-opacity="0.40"/><circle cx="1279.0" cy="41.8" r="0.8" fill="#dfe6ff" fill-opacity="0.36"/><circle cx="12.4" cy="189.1" r="0.8" fill="#dfe6ff" fill-opacity="0.43"/><circle cx="1464.9" cy="391.6" r="0.7" fill="#dfe6ff" fill-opacity="0.41"/><circle cx="41.9" cy="148.8" r="0.8" fill="#dfe6ff" fill-opacity="0.32"/><circle cx="1401.9" cy="421.0" r="0.5" fill="#dfe6ff" fill-opacity="0.41"/><circle cx="23.6" cy="184.2" r="0.7" fill="#dfe6ff" fill-opacity="0.16"/><circle cx="645.7" cy="19.4" r="0.8" fill="#dfe6ff" fill-opacity="0.19"/><circle cx="12.0" cy="189.1" r="0.8" fill="#dfe6ff" fill-opacity="0.42"/><circle cx="730.2" cy="40.2" r="0.8" fill="#dfe6ff" fill-opacity="0.41"/><circle cx="1258.4" cy="29.8" r="0.5" fill="#dfe6ff" fill-opacity="0.21"/><circle cx="1419.8" cy="268.4" r="0.6" fill="#dfe6ff" fill-opacity="0.34"/><circle cx="29.1" cy="297.3" r="0.6" fill="#dfe6ff" fill-opacity="0.21"/><circle cx="1398.5" cy="93.6" r="0.7" fill="#dfe6ff" fill-opacity="0.44"/><circle cx="615.8" cy="37.8" r="0.7" fill="#dfe6ff" fill-opacity="0.36"/><circle cx="1426.2" cy="80.7" r="0.6" fill="#dfe6ff" fill-opacity="0.41"/><circle cx="1012.5" cy="11.6" r="0.6" fill="#dfe6ff" fill-opacity="0.30"/><circle cx="400.4" cy="34.6" r="0.5" fill="#dfe6ff" fill-opacity="0.33"/><circle cx="440.9" cy="39.9" r="0.6" fill="#dfe6ff" fill-opacity="0.23"/><circle cx="4.7" cy="511.9" r="0.8" fill="#dfe6ff" fill-opacity="0.43"/><circle cx="1329.3" cy="0.3" r="0.7" fill="#dfe6ff" fill-opacity="0.31"/><circle cx="29.6" cy="121.5" r="0.6" fill="#dfe6ff" fill-opacity="0.22"/><circle cx="803.0" cy="8.0" r="0.6" fill="#dfe6ff" fill-opacity="0.45"/><circle cx="676.3" cy="32.3" r="0.8" fill="#dfe6ff" fill-opacity="0.15"/><circle cx="1399.2" cy="73.5" r="0.7" fill="#dfe6ff" fill-opacity="0.25"/><circle cx="1.7" cy="182.0" r="0.6" fill="#dfe6ff" fill-opacity="0.33"/><circle cx="1402.8" cy="250.8" r="0.8" fill="#dfe6ff" fill-opacity="0.31"/><circle cx="1049.1" cy="31.0" r="0.7" fill="#dfe6ff" fill-opacity="0.30"/><circle cx="849.8" cy="21.5" r="0.5" fill="#dfe6ff" fill-opacity="0.21"/><circle cx="1398.7" cy="256.9" r="0.6" fill="#dfe6ff" fill-opacity="0.25"/><circle cx="31.6" cy="427.5" r="0.8" fill="#dfe6ff" fill-opacity="0.37"/><circle cx="1397.2" cy="97.5" r="0.6" fill="#dfe6ff" fill-opacity="0.32"/><circle cx="41.2" cy="156.5" r="0.6" fill="#dfe6ff" fill-opacity="0.17"/><circle cx="36.2" cy="434.0" r="0.7" fill="#dfe6ff" fill-opacity="0.38"/><circle cx="33.8" cy="286.5" r="0.8" fill="#dfe6ff" fill-opacity="0.23"/><circle cx="1011.8" cy="35.7" r="0.8" fill="#dfe6ff" fill-opacity="0.17"/><circle cx="18.9" cy="146.2" r="0.5" fill="#dfe6ff" fill-opacity="0.19"/><circle cx="1437.1" cy="107.2" r="0.8" fill="#dfe6ff" fill-opacity="0.31"/><circle cx="1395.2" cy="238.5" r="0.6" fill="#dfe6ff" fill-opacity="0.18"/><circle cx="24.5" cy="489.3" r="0.5" fill="#dfe6ff" fill-opacity="0.35"/><circle cx="1463.3" cy="335.1" r="0.7" fill="#dfe6ff" fill-opacity="0.23"/><circle cx="12.6" cy="263.2" r="0.6" fill="#dfe6ff" fill-opacity="0.26"/><circle cx="1437.5" cy="26.3" r="0.5" fill="#dfe6ff" fill-opacity="0.20"/><circle cx="51.7" cy="394.8" r="0.6" fill="#dfe6ff" fill-opacity="0.29"/><circle cx="1235.1" cy="16.4" r="0.5" fill="#dfe6ff" fill-opacity="0.21"/><circle cx="269.0" cy="23.6" r="0.6" fill="#dfe6ff" fill-opacity="0.29"/><circle cx="30.9" cy="405.3" r="0.8" fill="#dfe6ff" fill-opacity="0.28"/><circle cx="1442.5" cy="454.5" r="0.6" fill="#dfe6ff" fill-opacity="0.31"/><circle cx="2.5" cy="174.9" r="0.7" fill="#dfe6ff" fill-opacity="0.34"/><circle cx="38.6" cy="287.3" r="0.6" fill="#dfe6ff" fill-opacity="0.23"/><circle cx="224.9" cy="40.3" r="0.7" fill="#dfe6ff" fill-opacity="0.19"/><circle cx="1229.6" cy="5.1" r="0.7" fill="#dfe6ff" fill-opacity="0.40"/><circle cx="44.4" cy="224.9" r="0.7" fill="#dfe6ff" fill-opacity="0.38"/><circle cx="2.9" cy="230.9" r="0.6" fill="#dfe6ff" fill-opacity="0.30"/><circle cx="752.9" cy="5.5" r="0.6" fill="#dfe6ff" fill-opacity="0.24"/><circle cx="28.3" cy="107.9" r="0.7" fill="#dfe6ff" fill-opacity="0.24"/><circle cx="19.6" cy="462.8" r="0.7" fill="#dfe6ff" fill-opacity="0.31"/><circle cx="7.1" cy="289.5" r="0.7" fill="#dfe6ff" fill-opacity="0.22"/><circle cx="505.4" cy="9.3" r="0.5" fill="#dfe6ff" fill-opacity="0.40"/><circle cx="1428.8" cy="48.4" r="0.7" fill="#dfe6ff" fill-opacity="0.35"/><circle cx="1249.6" cy="24.0" r="0.7" fill="#dfe6ff" fill-opacity="0.35"/><circle cx="1455.8" cy="154.9" r="0.7" fill="#dfe6ff" fill-opacity="0.18"/><circle cx="20.4" cy="71.7" r="0.8" fill="#dfe6ff" fill-opacity="0.43"/><circle cx="1030.4" cy="9.5" r="0.8" fill="#dfe6ff" fill-opacity="0.21"/><circle cx="1419.6" cy="382.8" r="0.5" fill="#dfe6ff" fill-opacity="0.37"/><circle cx="1451.3" cy="271.2" r="0.7" fill="#dfe6ff" fill-opacity="0.36"/><circle cx="36.4" cy="54.0" r="0.8" fill="#dfe6ff" fill-opacity="0.19"/><circle cx="1458.9" cy="172.7" r="0.8" fill="#dfe6ff" fill-opacity="0.30"/><circle cx="24.4" cy="198.3" r="0.7" fill="#dfe6ff" fill-opacity="0.17"/><circle cx="474.0" cy="16.1" r="0.7" fill="#dfe6ff" fill-opacity="0.23"/><circle cx="9.7" cy="266.8" r="0.7" fill="#dfe6ff" fill-opacity="0.44"/><circle cx="844.1" cy="40.5" r="0.5" fill="#dfe6ff" fill-opacity="0.34"/><circle cx="21.4" cy="241.2" r="0.7" fill="#dfe6ff" fill-opacity="0.17"/><circle cx="23.4" cy="503.9" r="0.8" fill="#dfe6ff" fill-opacity="0.16"/><circle cx="742.9" cy="13.3" r="0.7" fill="#dfe6ff" fill-opacity="0.29"/><circle cx="886.9" cy="11.6" r="0.7" fill="#dfe6ff" fill-opacity="0.35"/><circle cx="1.4" cy="23.4" r="0.8" fill="#dfe6ff" fill-opacity="0.15"/><circle cx="44.1" cy="408.0" r="0.5" fill="#dfe6ff" fill-opacity="0.34"/><circle cx="43.2" cy="505.1" r="0.7" fill="#dfe6ff" fill-opacity="0.23"/><circle cx="28.4" cy="34.6" r="0.6" fill="#dfe6ff" fill-opacity="0.36"/><circle cx="50.1" cy="436.2" r="0.6" fill="#dfe6ff" fill-opacity="0.25"/><circle cx="41.9" cy="183.1" r="0.8" fill="#dfe6ff" fill-opacity="0.24"/><circle cx="1432.4" cy="156.1" r="0.6" fill="#dfe6ff" fill-opacity="0.26"/><circle cx="1459.2" cy="394.8" r="0.5" fill="#dfe6ff" fill-opacity="0.45"/><circle cx="1457.0" cy="191.0" r="0.8" fill="#dfe6ff" fill-opacity="0.30"/><circle cx="2.1" cy="339.5" r="0.8" fill="#dfe6ff" fill-opacity="0.41"/><circle cx="372.0" cy="21.8" r="0.8" fill="#dfe6ff" fill-opacity="0.23"/><circle cx="19.1" cy="368.7" r="0.6" fill="#dfe6ff" fill-opacity="0.25"/><circle cx="1454.0" cy="438.2" r="0.8" fill="#dfe6ff" fill-opacity="0.34"/><circle cx="1084.5" cy="11.6" r="0.6" fill="#dfe6ff" fill-opacity="0.19"/><circle cx="980.6" cy="9.9" r="0.6" fill="#dfe6ff" fill-opacity="0.44"/><circle cx="36.1" cy="420.2" r="0.6" fill="#dfe6ff" fill-opacity="0.23"/><circle cx="369.1" cy="28.6" r="0.8" fill="#dfe6ff" fill-opacity="0.43"/><circle cx="1398.4" cy="383.2" r="0.5" fill="#dfe6ff" fill-opacity="0.41"/><circle cx="522.2" cy="23.2" r="0.5" fill="#dfe6ff" fill-opacity="0.27"/><circle cx="1453.3" cy="451.1" r="0.6" fill="#dfe6ff" fill-opacity="0.26"/><circle cx="1172.7" cy="36.1" r="0.7" fill="#dfe6ff" fill-opacity="0.22"/><circle cx="1423.6" cy="110.7" r="0.8" fill="#dfe6ff" fill-opacity="0.35"/><circle cx="414.1" cy="37.3" r="0.8" fill="#dfe6ff" fill-opacity="0.20"/><circle cx="1367.6" cy="10.8" r="0.8" fill="#dfe6ff" fill-opacity="0.28"/><circle cx="1295.7" cy="11.6" r="0.6" fill="#dfe6ff" fill-opacity="0.23"/><circle cx="16.8" cy="81.6" r="0.6" fill="#dfe6ff" fill-opacity="0.26"/><circle cx="75.1" cy="2.8" r="0.7" fill="#dfe6ff" fill-opacity="0.35"/><circle cx="492.7" cy="6.0" r="0.6" fill="#dfe6ff" fill-opacity="0.45"/><circle cx="1.7" cy="210.6" r="0.8" fill="#dfe6ff" fill-opacity="0.32"/><circle cx="903.5" cy="35.6" r="0.7" fill="#dfe6ff" fill-opacity="0.23"/><circle cx="1455.5" cy="517.3" r="0.8" fill="#dfe6ff" fill-opacity="0.32"/><circle cx="1398.3" cy="451.9" r="0.6" fill="#dfe6ff" fill-opacity="0.31"/><circle cx="14.1" cy="54.4" r="0.7" fill="#dfe6ff" fill-opacity="0.17"/><circle cx="46.1" cy="73.4" r="0.7" fill="#dfe6ff" fill-opacity="0.15"/><circle cx="42.1" cy="420.9" r="0.8" fill="#dfe6ff" fill-opacity="0.27"/><circle cx="1452.9" cy="409.2" r="0.5" fill="#dfe6ff" fill-opacity="0.43"/><circle cx="43.7" cy="237.9" r="0.5" fill="#dfe6ff" fill-opacity="0.15"/><circle cx="474.1" cy="31.1" r="0.7" fill="#dfe6ff" fill-opacity="0.39"/><circle cx="934.7" cy="15.2" r="0.7" fill="#dfe6ff" fill-opacity="0.17"/><circle cx="30.9" cy="169.2" r="0.6" fill="#dfe6ff" fill-opacity="0.37"/><circle cx="1088.8" cy="23.5" r="0.6" fill="#dfe6ff" fill-opacity="0.20"/><circle cx="209.4" cy="15.1" r="0.8" fill="#dfe6ff" fill-opacity="0.16"/><circle cx="76.5" cy="4.1" r="0.6" fill="#dfe6ff" fill-opacity="0.16"/><circle cx="97.4" cy="25.3" r="0.7" fill="#dfe6ff" fill-opacity="0.28"/><circle cx="1410.4" cy="237.7" r="0.6" fill="#dfe6ff" fill-opacity="0.39"/><circle cx="571.5" cy="39.6" r="0.6" fill="#dfe6ff" fill-opacity="0.38"/><circle cx="0.5" cy="391.3" r="0.8" fill="#dfe6ff" fill-opacity="0.42"/><circle cx="903.1" cy="14.8" r="0.8" fill="#dfe6ff" fill-opacity="0.41"/><circle cx="26.3" cy="313.8" r="0.5" fill="#dfe6ff" fill-opacity="0.19"/><circle cx="1447.1" cy="251.1" r="0.8" fill="#dfe6ff" fill-opacity="0.28"/><circle cx="337.0" cy="25.8" r="0.5" fill="#dfe6ff" fill-opacity="0.30"/><circle cx="919.0" cy="19.2" r="0.5" fill="#dfe6ff" fill-opacity="0.33"/><circle cx="1405.6" cy="266.6" r="0.7" fill="#dfe6ff" fill-opacity="0.37"/><circle cx="1079.3" cy="42.5" r="0.8" fill="#dfe6ff" fill-opacity="0.17"/><circle cx="1447.7" cy="471.0" r="0.5" fill="#dfe6ff" fill-opacity="0.22"/><circle cx="1440.4" cy="490.3" r="0.5" fill="#dfe6ff" fill-opacity="0.39"/><circle cx="51.7" cy="73.9" r="0.5" fill="#dfe6ff" fill-opacity="0.36"/><circle cx="1182.5" cy="19.5" r="0.5" fill="#dfe6ff" fill-opacity="0.41"/><circle cx="409.6" cy="27.7" r="0.5" fill="#dfe6ff" fill-opacity="0.18"/><circle cx="39.4" cy="461.2" r="0.5" fill="#dfe6ff" fill-opacity="0.39"/><circle cx="1449.0" cy="305.0" r="0.5" fill="#dfe6ff" fill-opacity="0.39"/><circle cx="536.0" cy="4.3" r="0.5" fill="#dfe6ff" fill-opacity="0.43"/><circle cx="1410.4" cy="180.6" r="0.8" fill="#dfe6ff" fill-opacity="0.20"/><circle cx="1244.1" cy="26.5" r="0.8" fill="#dfe6ff" fill-opacity="0.17"/><circle cx="1409.5" cy="343.1" r="0.6" fill="#dfe6ff" fill-opacity="0.32"/><circle cx="1421.5" cy="432.5" r="0.7" fill="#dfe6ff" fill-opacity="0.40"/><circle cx="1441.1" cy="142.5" r="0.6" fill="#dfe6ff" fill-opacity="0.20"/><circle cx="1016.4" cy="20.1" r="0.6" fill="#dfe6ff" fill-opacity="0.23"/><circle cx="504.0" cy="26.8" r="0.7" fill="#dfe6ff" fill-opacity="0.21"/><circle cx="1443.4" cy="394.2" r="0.7" fill="#dfe6ff" fill-opacity="0.41"/><circle cx="1409.0" cy="77.1" r="0.7" fill="#dfe6ff" fill-opacity="0.28"/><circle cx="1423.6" cy="260.9" r="0.5" fill="#dfe6ff" fill-opacity="0.43"/><circle cx="1030.8" cy="10.1" r="0.5" fill="#dfe6ff" fill-opacity="0.24"/><circle cx="1415.1" cy="450.6" r="0.8" fill="#dfe6ff" fill-opacity="0.22"/><circle cx="10.3" cy="240.5" r="0.6" fill="#dfe6ff" fill-opacity="0.28"/><circle cx="614.0" cy="12.1" r="0.8" fill="#dfe6ff" fill-opacity="0.35"/><circle cx="969.4" cy="0.5" r="0.6" fill="#dfe6ff" fill-opacity="0.15"/><circle cx="869.2" cy="37.2" r="0.8" fill="#dfe6ff" fill-opacity="0.28"/><circle cx="1202.1" cy="36.6" r="0.5" fill="#dfe6ff" fill-opacity="0.31"/><circle cx="1313.4" cy="3.8" r="0.7" fill="#dfe6ff" fill-opacity="0.15"/><circle cx="864.7" cy="30.0" r="0.5" fill="#dfe6ff" fill-opacity="0.35"/><circle cx="106.3" cy="7.3" r="0.7" fill="#dfe6ff" fill-opacity="0.29"/><circle cx="3.2" cy="149.0" r="0.5" fill="#dfe6ff" fill-opacity="0.45"/><circle cx="1214.0" cy="27.9" r="0.5" fill="#dfe6ff" fill-opacity="0.45"/><circle cx="677.2" cy="17.3" r="0.6" fill="#dfe6ff" fill-opacity="0.31"/><circle cx="25.9" cy="439.1" r="0.8" fill="#dfe6ff" fill-opacity="0.18"/><circle cx="1395.3" cy="500.1" r="0.7" fill="#dfe6ff" fill-opacity="0.35"/><circle cx="1428.2" cy="464.7" r="0.8" fill="#dfe6ff" fill-opacity="0.29"/><circle cx="1259.4" cy="40.6" r="0.5" fill="#dfe6ff" fill-opacity="0.18"/><circle cx="29.2" cy="507.8" r="0.5" fill="#dfe6ff" fill-opacity="0.24"/><circle cx="6.5" cy="313.9" r="0.6" fill="#dfe6ff" fill-opacity="0.35"/><circle cx="16.0" cy="211.3" r="0.6" fill="#dfe6ff" fill-opacity="0.22"/><circle cx="2.8" cy="146.8" r="0.8" fill="#dfe6ff" fill-opacity="0.20"/><circle cx="201.7" cy="38.6" r="0.6" fill="#dfe6ff" fill-opacity="0.19"/><circle cx="9.0" cy="337.8" r="0.5" fill="#dfe6ff" fill-opacity="0.27"/><circle cx="225.2" cy="35.2" r="0.8" fill="#dfe6ff" fill-opacity="0.20"/><circle cx="1.5" cy="95.6" r="0.7" fill="#dfe6ff" fill-opacity="0.42"/><circle cx="39.7" cy="413.0" r="0.8" fill="#dfe6ff" fill-opacity="0.27"/><circle cx="382.1" cy="4.8" r="0.8" fill="#dfe6ff" fill-opacity="0.25"/><circle cx="34.0" cy="465.9" r="0.6" fill="#dfe6ff" fill-opacity="0.32"/><circle cx="47.0" cy="231.2" r="0.7" fill="#dfe6ff" fill-opacity="0.23"/><circle cx="11.4" cy="83.3" r="0.8" fill="#dfe6ff" fill-opacity="0.27"/><circle cx="17.4" cy="98.7" r="0.7" fill="#dfe6ff" fill-opacity="0.40"/><circle cx="773.3" cy="23.5" r="0.8" fill="#dfe6ff" fill-opacity="0.40"/><circle cx="37.1" cy="58.5" r="0.7" fill="#dfe6ff" fill-opacity="0.30"/><circle cx="1098.0" cy="21.0" r="0.5" fill="#dfe6ff" fill-opacity="0.26"/><circle cx="5.5" cy="371.0" r="0.7" fill="#dfe6ff" fill-opacity="0.44"/><circle cx="876.2" cy="15.9" r="0.7" fill="#dfe6ff" fill-opacity="0.21"/><circle cx="1398.9" cy="130.6" r="0.5" fill="#dfe6ff" fill-opacity="0.30"/><circle cx="1398.7" cy="87.3" r="0.7" fill="#dfe6ff" fill-opacity="0.33"/><circle cx="1461.1" cy="351.7" r="0.7" fill="#dfe6ff" fill-opacity="0.27"/><circle cx="996.0" cy="3.7" r="0.6" fill="#dfe6ff" fill-opacity="0.40"/><circle cx="464.9" cy="35.2" r="0.7" fill="#dfe6ff" fill-opacity="0.34"/><circle cx="1118.6" cy="2.1" r="0.5" fill="#dfe6ff" fill-opacity="0.32"/><circle cx="1439.7" cy="53.7" r="0.6" fill="#dfe6ff" fill-opacity="0.32"/><circle cx="1079.6" cy="18.0" r="0.5" fill="#dfe6ff" fill-opacity="0.20"/><circle cx="1004.0" cy="6.0" r="0.8" fill="#dfe6ff" fill-opacity="0.35"/><circle cx="1426.2" cy="471.0" r="0.5" fill="#dfe6ff" fill-opacity="0.40"/><circle cx="1419.9" cy="439.7" r="0.5" fill="#dfe6ff" fill-opacity="0.36"/><circle cx="1012.2" cy="28.1" r="0.5" fill="#dfe6ff" fill-opacity="0.43"/><circle cx="607.7" cy="23.1" r="0.5" fill="#dfe6ff" fill-opacity="0.20"/><circle cx="597.1" cy="38.6" r="0.8" fill="#dfe6ff" fill-opacity="0.21"/><circle cx="1429.6" cy="251.3" r="0.8" fill="#dfe6ff" fill-opacity="0.30"/><circle cx="28.6" cy="450.8" r="0.7" fill="#dfe6ff" fill-opacity="0.21"/><circle cx="240.0" cy="15.0" r="0.8" fill="#dfe6ff" fill-opacity="0.29"/><circle cx="24.0" cy="410.7" r="0.6" fill="#dfe6ff" fill-opacity="0.29"/><circle cx="1418.0" cy="375.7" r="0.6" fill="#dfe6ff" fill-opacity="0.34"/><circle cx="601.8" cy="1.9" r="0.5" fill="#dfe6ff" fill-opacity="0.39"/><circle cx="356.3" cy="9.2" r="0.5" fill="#dfe6ff" fill-opacity="0.32"/><circle cx="1458.7" cy="260.4" r="0.8" fill="#dfe6ff" fill-opacity="0.19"/><circle cx="908.2" cy="29.2" r="0.6" fill="#dfe6ff" fill-opacity="0.16"/><circle cx="29.5" cy="306.1" r="0.7" fill="#dfe6ff" fill-opacity="0.30"/><circle cx="50.5" cy="213.2" r="0.7" fill="#dfe6ff" fill-opacity="0.18"/><circle cx="1410.3" cy="138.0" r="0.7" fill="#dfe6ff" fill-opacity="0.19"/><circle cx="1435.8" cy="472.0" r="0.7" fill="#dfe6ff" fill-opacity="0.36"/><circle cx="1393.3" cy="30.9" r="0.7" fill="#dfe6ff" fill-opacity="0.33"/><circle cx="1463.7" cy="95.7" r="0.7" fill="#dfe6ff" fill-opacity="0.16"/><circle cx="13.2" cy="182.8" r="0.7" fill="#dfe6ff" fill-opacity="0.32"/><circle cx="111.0" cy="1.2" r="0.7" fill="#dfe6ff" fill-opacity="0.43"/><circle cx="570.9" cy="35.3" r="0.6" fill="#dfe6ff" fill-opacity="0.33"/><circle cx="38.2" cy="298.0" r="0.7" fill="#dfe6ff" fill-opacity="0.24"/><circle cx="40.6" cy="353.9" r="0.6" fill="#dfe6ff" fill-opacity="0.29"/><circle cx="18.0" cy="146.1" r="0.7" fill="#dfe6ff" fill-opacity="0.32"/><circle cx="340.2" cy="40.8" r="0.5" fill="#dfe6ff" fill-opacity="0.32"/><circle cx="1447.0" cy="187.2" r="0.5" fill="#dfe6ff" fill-opacity="0.18"/><circle cx="6.2" cy="514.7" r="0.7" fill="#dfe6ff" fill-opacity="0.26"/><circle cx="1390.6" cy="28.6" r="0.6" fill="#dfe6ff" fill-opacity="0.16"/><circle cx="51.1" cy="369.8" r="0.5" fill="#dfe6ff" fill-opacity="0.28"/><circle cx="4.5" cy="374.3" r="0.8" fill="#dfe6ff" fill-opacity="0.43"/><circle cx="1402.1" cy="109.5" r="0.6" fill="#dfe6ff" fill-opacity="0.17"/><circle cx="29.0" cy="506.9" r="0.5" fill="#dfe6ff" fill-opacity="0.19"/><circle cx="491.7" cy="30.2" r="0.6" fill="#dfe6ff" fill-opacity="0.44"/><circle cx="1459.8" cy="452.6" r="0.5" fill="#dfe6ff" fill-opacity="0.33"/><circle cx="1464.8" cy="315.6" r="0.7" fill="#dfe6ff" fill-opacity="0.43"/><circle cx="760.7" cy="41.3" r="0.5" fill="#dfe6ff" fill-opacity="0.18"/><circle cx="440.7" cy="42.5" r="0.8" fill="#dfe6ff" fill-opacity="0.16"/><circle cx="1443.2" cy="290.9" r="0.5" fill="#dfe6ff" fill-opacity="0.15"/><circle cx="1163.5" cy="41.9" r="0.6" fill="#dfe6ff" fill-opacity="0.27"/><circle cx="508.0" cy="0.6" r="0.6" fill="#dfe6ff" fill-opacity="0.23"/><circle cx="27.4" cy="203.0" r="0.7" fill="#dfe6ff" fill-opacity="0.29"/><circle cx="1291.9" cy="7.6" r="0.6" fill="#dfe6ff" fill-opacity="0.21"/><circle cx="11.5" cy="481.2" r="0.6" fill="#dfe6ff" fill-opacity="0.22"/><circle cx="13.5" cy="292.4" r="0.7" fill="#dfe6ff" fill-opacity="0.32"/><circle cx="455.4" cy="2.8" r="0.7" fill="#dfe6ff" fill-opacity="0.37"/><circle cx="50.5" cy="10.7" r="0.5" fill="#dfe6ff" fill-opacity="0.17"/><circle cx="1412.1" cy="146.9" r="0.8" fill="#dfe6ff" fill-opacity="0.32"/><circle cx="981.2" cy="3.0" r="0.5" fill="#dfe6ff" fill-opacity="0.45"/><circle cx="198.6" cy="34.0" r="0.6" fill="#dfe6ff" fill-opacity="0.25"/><circle cx="1421.6" cy="179.9" r="0.5" fill="#dfe6ff" fill-opacity="0.29"/><circle cx="1396.0" cy="281.0" r="0.8" fill="#dfe6ff" fill-opacity="0.44"/><circle cx="8.2" cy="75.3" r="0.6" fill="#dfe6ff" fill-opacity="0.41"/><circle cx="1460.2" cy="206.1" r="0.6" fill="#dfe6ff" fill-opacity="0.19"/><circle cx="1461.2" cy="134.9" r="0.6" fill="#dfe6ff" fill-opacity="0.36"/><circle cx="1244.0" cy="38.1" r="0.8" fill="#dfe6ff" fill-opacity="0.26"/><circle cx="1459.7" cy="112.9" r="0.5" fill="#dfe6ff" fill-opacity="0.45"/><circle cx="1442.3" cy="101.7" r="0.7" fill="#dfe6ff" fill-opacity="0.20"/><circle cx="771.9" cy="23.2" r="0.8" fill="#dfe6ff" fill-opacity="0.38"/><circle cx="49.3" cy="81.9" r="0.6" fill="#dfe6ff" fill-opacity="0.15"/><circle cx="1463.3" cy="488.6" r="0.6" fill="#dfe6ff" fill-opacity="0.20"/><circle cx="832.8" cy="12.7" r="0.8" fill="#dfe6ff" fill-opacity="0.26"/><circle cx="1429.2" cy="61.6" r="0.6" fill="#dfe6ff" fill-opacity="0.43"/><circle cx="1396.7" cy="406.8" r="0.8" fill="#dfe6ff" fill-opacity="0.31"/><circle cx="66.7" cy="17.3" r="0.6" fill="#dfe6ff" fill-opacity="0.44"/><circle cx="621.3" cy="41.3" r="0.5" fill="#dfe6ff" fill-opacity="0.29"/><circle cx="22.2" cy="13.1" r="0.5" fill="#dfe6ff" fill-opacity="0.25"/><circle cx="1434.3" cy="371.1" r="0.7" fill="#dfe6ff" fill-opacity="0.34"/><circle cx="522.4" cy="38.0" r="0.8" fill="#dfe6ff" fill-opacity="0.28"/><circle cx="13.3" cy="495.9" r="0.8" fill="#dfe6ff" fill-opacity="0.22"/><circle cx="1454.7" cy="463.7" r="0.6" fill="#dfe6ff" fill-opacity="0.29"/><circle cx="47.8" cy="408.0" r="0.7" fill="#dfe6ff" fill-opacity="0.22"/><circle cx="8.2" cy="494.9" r="0.7" fill="#dfe6ff" fill-opacity="0.34"/><circle cx="0.2" cy="271.7" r="0.5" fill="#dfe6ff" fill-opacity="0.30"/><circle cx="1431.0" cy="223.8" r="0.5" fill="#dfe6ff" fill-opacity="0.35"/><circle cx="25.9" cy="446.9" r="0.8" fill="#dfe6ff" fill-opacity="0.17"/><circle cx="936.4" cy="2.7" r="0.6" fill="#dfe6ff" fill-opacity="0.44"/><circle cx="648.6" cy="3.6" r="0.5" fill="#dfe6ff" fill-opacity="0.22"/><circle cx="1450.9" cy="164.5" r="0.5" fill="#dfe6ff" fill-opacity="0.28"/><circle cx="49.2" cy="276.7" r="0.8" fill="#dfe6ff" fill-opacity="0.20"/><circle cx="975.3" cy="21.6" r="0.6" fill="#dfe6ff" fill-opacity="0.34"/><circle cx="23.2" cy="185.5" r="0.6" fill="#dfe6ff" fill-opacity="0.36"/><circle cx="1444.8" cy="429.2" r="0.6" fill="#dfe6ff" fill-opacity="0.19"/><circle cx="37.1" cy="64.1" r="0.5" fill="#dfe6ff" fill-opacity="0.44"/><circle cx="24.5" cy="350.2" r="0.8" fill="#dfe6ff" fill-opacity="0.43"/><circle cx="3.4" cy="361.3" r="0.5" fill="#dfe6ff" fill-opacity="0.23"/><circle cx="571.3" cy="10.9" r="0.7" fill="#dfe6ff" fill-opacity="0.45"/><circle cx="6.5" cy="389.6" r="0.5" fill="#dfe6ff" fill-opacity="0.28"/><circle cx="20.5" cy="401.6" r="0.5" fill="#dfe6ff" fill-opacity="0.32"/><circle cx="1439.7" cy="277.7" r="0.8" fill="#dfe6ff" fill-opacity="0.36"/><circle cx="1294.5" cy="21.5" r="0.6" fill="#dfe6ff" fill-opacity="0.22"/><circle cx="6.1" cy="116.1" r="0.8" fill="#dfe6ff" fill-opacity="0.24"/><circle cx="274.4" cy="27.9" r="0.5" fill="#dfe6ff" fill-opacity="0.25"/><circle cx="1458.8" cy="181.6" r="0.7" fill="#dfe6ff" fill-opacity="0.44"/><circle cx="1418.3" cy="176.2" r="0.8" fill="#dfe6ff" fill-opacity="0.17"/><circle cx="1033.0" cy="2.2" r="0.6" fill="#dfe6ff" fill-opacity="0.24"/><circle cx="1420.5" cy="250.0" r="0.8" fill="#dfe6ff" fill-opacity="0.17"/><circle cx="520.5" cy="22.7" r="0.8" fill="#dfe6ff" fill-opacity="0.21"/><circle cx="1450.3" cy="480.2" r="0.5" fill="#dfe6ff" fill-opacity="0.19"/><circle cx="35.7" cy="406.7" r="0.7" fill="#dfe6ff" fill-opacity="0.33"/><circle cx="0.6" cy="84.6" r="0.6" fill="#dfe6ff" fill-opacity="0.38"/><circle cx="220.2" cy="23.7" r="0.7" fill="#dfe6ff" fill-opacity="0.39"/><circle cx="48.6" cy="170.9" r="0.5" fill="#dfe6ff" fill-opacity="0.36"/><circle cx="22.5" cy="93.8" r="0.8" fill="#dfe6ff" fill-opacity="0.21"/><circle cx="1325.3" cy="23.7" r="0.5" fill="#dfe6ff" fill-opacity="0.23"/><circle cx="22.8" cy="104.0" r="0.8" fill="#dfe6ff" fill-opacity="0.30"/><circle cx="1412.1" cy="431.7" r="0.6" fill="#dfe6ff" fill-opacity="0.35"/><circle cx="2.4" cy="381.9" r="0.6" fill="#dfe6ff" fill-opacity="0.22"/><circle cx="20.9" cy="225.8" r="0.8" fill="#dfe6ff" fill-opacity="0.37"/><circle cx="10.8" cy="160.0" r="0.8" fill="#dfe6ff" fill-opacity="0.45"/><circle cx="1459.8" cy="347.4" r="0.7" fill="#dfe6ff" fill-opacity="0.24"/><circle cx="1268.2" cy="21.9" r="0.8" fill="#dfe6ff" fill-opacity="0.37"/><circle cx="1408.4" cy="59.2" r="0.5" fill="#dfe6ff" fill-opacity="0.36"/><circle cx="19.0" cy="251.4" r="0.8" fill="#dfe6ff" fill-opacity="0.28"/><circle cx="34.2" cy="37.5" r="0.5" fill="#dfe6ff" fill-opacity="0.29"/><circle cx="45.7" cy="259.9" r="0.8" fill="#dfe6ff" fill-opacity="0.35"/><circle cx="41.6" cy="486.7" r="0.5" fill="#dfe6ff" fill-opacity="0.37"/><circle cx="1060.7" cy="40.8" r="0.8" fill="#dfe6ff" fill-opacity="0.28"/><circle cx="11.8" cy="410.5" r="0.7" fill="#dfe6ff" fill-opacity="0.32"/><circle cx="1230.4" cy="14.8" r="0.8" fill="#dfe6ff" fill-opacity="0.23"/><circle cx="11.5" cy="233.0" r="0.6" fill="#dfe6ff" fill-opacity="0.37"/><circle cx="25.9" cy="67.6" r="0.6" fill="#dfe6ff" fill-opacity="0.40"/><circle cx="864.9" cy="30.6" r="0.7" fill="#dfe6ff" fill-opacity="0.37"/><circle cx="13.1" cy="379.4" r="0.8" fill="#dfe6ff" fill-opacity="0.31"/><circle cx="1404.6" cy="415.4" r="0.7" fill="#dfe6ff" fill-opacity="0.39"/><circle cx="1.1" cy="404.0" r="0.7" fill="#dfe6ff" fill-opacity="0.31"/><circle cx="8.7" cy="341.3" r="0.8" fill="#dfe6ff" fill-opacity="0.35"/><circle cx="1180.8" cy="18.1" r="0.6" fill="#dfe6ff" fill-opacity="0.18"/><circle cx="678.1" cy="24.0" r="0.8" fill="#dfe6ff" fill-opacity="0.32"/><circle cx="1419.7" cy="405.0" r="0.5" fill="#dfe6ff" fill-opacity="0.15"/><circle cx="8.7" cy="216.4" r="0.6" fill="#dfe6ff" fill-opacity="0.26"/><circle cx="525.1" cy="23.1" r="0.5" fill="#dfe6ff" fill-opacity="0.31"/><circle cx="592.7" cy="33.9" r="0.6" fill="#dfe6ff" fill-opacity="0.21"/><circle cx="1333.9" cy="27.4" r="0.5" fill="#dfe6ff" fill-opacity="0.37"/><circle cx="716.5" cy="29.9" r="0.5" fill="#dfe6ff" fill-opacity="0.35"/><circle cx="484.4" cy="26.9" r="0.7" fill="#dfe6ff" fill-opacity="0.36"/><circle cx="1286.9" cy="9.4" r="0.8" fill="#dfe6ff" fill-opacity="0.36"/><circle cx="1344.0" cy="33.9" r="0.7" fill="#dfe6ff" fill-opacity="0.33"/><circle cx="1410.6" cy="149.2" r="0.7" fill="#dfe6ff" fill-opacity="0.20"/><circle cx="1418.9" cy="252.9" r="0.8" fill="#dfe6ff" fill-opacity="0.20"/><circle cx="868.2" cy="32.8" r="0.8" fill="#dfe6ff" fill-opacity="0.26"/><circle cx="1410.1" cy="464.0" r="0.6" fill="#dfe6ff" fill-opacity="0.29"/><circle cx="722.2" cy="28.8" r="0.5" fill="#dfe6ff" fill-opacity="0.38"/><circle cx="48.9" cy="54.6" r="0.7" fill="#dfe6ff" fill-opacity="0.16"/><circle cx="1442.6" cy="25.8" r="0.8" fill="#dfe6ff" fill-opacity="0.17"/><circle cx="30.6" cy="30.0" r="0.6" fill="#dfe6ff" fill-opacity="0.32"/><circle cx="223.7" cy="29.2" r="0.5" fill="#dfe6ff" fill-opacity="0.29"/><circle cx="822.4" cy="15.3" r="0.7" fill="#dfe6ff" fill-opacity="0.15"/><circle cx="1416.0" cy="50.2" r="0.7" fill="#dfe6ff" fill-opacity="0.24"/><circle cx="14.0" cy="96.9" r="0.5" fill="#dfe6ff" fill-opacity="0.29"/><circle cx="16.2" cy="466.1" r="0.8" fill="#dfe6ff" fill-opacity="0.36"/><circle cx="21.5" cy="229.0" r="0.7" fill="#dfe6ff" fill-opacity="0.29"/><circle cx="27.7" cy="419.2" r="0.6" fill="#dfe6ff" fill-opacity="0.24"/><circle cx="573.8" cy="27.9" r="0.5" fill="#dfe6ff" fill-opacity="0.34"/><circle cx="280.2" cy="37.4" r="0.8" fill="#dfe6ff" fill-opacity="0.36"/><circle cx="1426.8" cy="232.6" r="0.6" fill="#dfe6ff" fill-opacity="0.41"/><circle cx="1459.2" cy="441.5" r="0.5" fill="#dfe6ff" fill-opacity="0.18"/><circle cx="17.5" cy="246.5" r="0.7" fill="#dfe6ff" fill-opacity="0.16"/><circle cx="522.7" cy="41.1" r="0.5" fill="#dfe6ff" fill-opacity="0.15"/><circle cx="570.6" cy="27.5" r="0.5" fill="#dfe6ff" fill-opacity="0.28"/><circle cx="1457.7" cy="325.2" r="0.5" fill="#dfe6ff" fill-opacity="0.32"/><circle cx="679.7" cy="38.7" r="0.8" fill="#dfe6ff" fill-opacity="0.22"/><circle cx="28.3" cy="203.6" r="0.5" fill="#dfe6ff" fill-opacity="0.15"/><circle cx="1459.7" cy="331.1" r="0.6" fill="#dfe6ff" fill-opacity="0.38"/><circle cx="1403.2" cy="24.0" r="0.5" fill="#dfe6ff" fill-opacity="0.44"/><circle cx="275.8" cy="34.3" r="0.6" fill="#dfe6ff" fill-opacity="0.38"/><circle cx="50.1" cy="34.3" r="0.6" fill="#dfe6ff" fill-opacity="0.39"/><circle cx="38.5" cy="465.8" r="0.7" fill="#dfe6ff" fill-opacity="0.39"/><circle cx="1446.9" cy="195.4" r="0.5" fill="#dfe6ff" fill-opacity="0.33"/><circle cx="1398.1" cy="311.6" r="0.8" fill="#dfe6ff" fill-opacity="0.41"/><circle cx="20.2" cy="352.0" r="0.8" fill="#dfe6ff" fill-opacity="0.30"/><circle cx="1411.8" cy="176.0" r="0.6" fill="#dfe6ff" fill-opacity="0.35"/><circle cx="273.2" cy="10.2" r="0.7" fill="#dfe6ff" fill-opacity="0.43"/><circle cx="6.2" cy="345.2" r="0.8" fill="#dfe6ff" fill-opacity="0.43"/><circle cx="10.4" cy="17.6" r="0.8" fill="#dfe6ff" fill-opacity="0.19"/><circle cx="171.3" cy="15.5" r="0.7" fill="#dfe6ff" fill-opacity="0.32"/><circle cx="1381.3" cy="27.7" r="0.6" fill="#dfe6ff" fill-opacity="0.21"/><circle cx="964.2" cy="27.7" r="0.6" fill="#dfe6ff" fill-opacity="0.28"/><circle cx="2.2" cy="301.8" r="0.5" fill="#dfe6ff" fill-opacity="0.19"/><circle cx="330.2" cy="18.7" r="0.8" fill="#dfe6ff" fill-opacity="0.37"/><circle cx="1445.6" cy="67.6" r="0.5" fill="#dfe6ff" fill-opacity="0.19"/><circle cx="55.0" cy="1.2" r="0.8" fill="#dfe6ff" fill-opacity="0.19"/><circle cx="1404.7" cy="206.2" r="0.5" fill="#dfe6ff" fill-opacity="0.33"/><circle cx="263.6" cy="19.4" r="0.8" fill="#dfe6ff" fill-opacity="0.21"/><circle cx="8.7" cy="123.4" r="0.8" fill="#dfe6ff" fill-opacity="0.27"/><circle cx="1094.4" cy="4.1" r="0.5" fill="#dfe6ff" fill-opacity="0.29"/><circle cx="901.1" cy="8.3" r="0.7" fill="#dfe6ff" fill-opacity="0.43"/><circle cx="41.0" cy="449.3" r="0.7" fill="#dfe6ff" fill-opacity="0.31"/><circle cx="1404.2" cy="225.9" r="0.7" fill="#dfe6ff" fill-opacity="0.43"/><circle cx="956.8" cy="11.3" r="0.7" fill="#dfe6ff" fill-opacity="0.24"/><circle cx="1449.9" cy="376.6" r="0.6" fill="#dfe6ff" fill-opacity="0.34"/><circle cx="1418.9" cy="163.1" r="0.5" fill="#dfe6ff" fill-opacity="0.37"/><circle cx="1420.3" cy="331.8" r="0.7" fill="#dfe6ff" fill-opacity="0.45"/><circle cx="1440.9" cy="501.1" r="0.6" fill="#dfe6ff" fill-opacity="0.23"/><circle cx="4.7" cy="413.7" r="0.5" fill="#dfe6ff" fill-opacity="0.28"/><circle cx="10.8" cy="498.6" r="0.8" fill="#dfe6ff" fill-opacity="0.21"/><circle cx="44.6" cy="513.7" r="0.7" fill="#dfe6ff" fill-opacity="0.21"/><circle cx="31.5" cy="301.7" r="0.7" fill="#dfe6ff" fill-opacity="0.21"/><circle cx="17.7" cy="43.5" r="0.5" fill="#dfe6ff" fill-opacity="0.36"/><circle cx="33.4" cy="266.8" r="0.5" fill="#dfe6ff" fill-opacity="0.17"/><circle cx="1411.3" cy="272.7" r="0.8" fill="#dfe6ff" fill-opacity="0.41"/><circle cx="1424.5" cy="194.6" r="0.8" fill="#dfe6ff" fill-opacity="0.22"/><circle cx="1449.7" cy="299.8" r="0.6" fill="#dfe6ff" fill-opacity="0.42"/><circle cx="49.8" cy="102.9" r="0.6" fill="#dfe6ff" fill-opacity="0.36"/><circle cx="43.9" cy="303.2" r="0.6" fill="#dfe6ff" fill-opacity="0.32"/><circle cx="50.3" cy="70.8" r="0.5" fill="#dfe6ff" fill-opacity="0.43"/><circle cx="990.9" cy="11.0" r="0.7" fill="#dfe6ff" fill-opacity="0.31"/><circle cx="1421.1" cy="96.9" r="0.5" fill="#dfe6ff" fill-opacity="0.29"/><circle cx="858.9" cy="36.7" r="0.6" fill="#dfe6ff" fill-opacity="0.31"/><circle cx="884.0" cy="35.4" r="0.7" fill="#dfe6ff" fill-opacity="0.43"/><circle cx="951.8" cy="16.0" r="0.8" fill="#dfe6ff" fill-opacity="0.32"/><circle cx="44.9" cy="366.0" r="0.7" fill="#dfe6ff" fill-opacity="0.24"/><circle cx="1439.3" cy="266.4" r="0.5" fill="#dfe6ff" fill-opacity="0.28"/><circle cx="1428.7" cy="477.0" r="0.6" fill="#dfe6ff" fill-opacity="0.30"/><circle cx="192.7" cy="26.1" r="0.5" fill="#dfe6ff" fill-opacity="0.45"/><circle cx="1415.3" cy="260.4" r="0.8" fill="#dfe6ff" fill-opacity="0.39"/><circle cx="1348.7" cy="20.8" r="0.8" fill="#dfe6ff" fill-opacity="0.35"/><circle cx="1400.6" cy="99.1" r="0.8" fill="#dfe6ff" fill-opacity="0.31"/><circle cx="1461.7" cy="254.8" r="0.8" fill="#dfe6ff" fill-opacity="0.18"/><circle cx="217.0" cy="27.9" r="0.7" fill="#dfe6ff" fill-opacity="0.26"/><circle cx="1409.9" cy="48.4" r="0.6" fill="#dfe6ff" fill-opacity="0.29"/><circle cx="199.3" cy="38.3" r="0.5" fill="#dfe6ff" fill-opacity="0.32"/><circle cx="487.7" cy="7.9" r="0.5" fill="#dfe6ff" fill-opacity="0.23"/><circle cx="1032.9" cy="18.3" r="0.5" fill="#dfe6ff" fill-opacity="0.18"/><circle cx="955.2" cy="20.2" r="0.6" fill="#dfe6ff" fill-opacity="0.40"/><circle cx="1407.5" cy="279.0" r="0.7" fill="#dfe6ff" fill-opacity="0.43"/><circle cx="942.4" cy="3.2" r="0.6" fill="#dfe6ff" fill-opacity="0.43"/><circle cx="16.7" cy="388.3" r="0.5" fill="#dfe6ff" fill-opacity="0.39"/><circle cx="1236.8" cy="22.1" r="0.7" fill="#dfe6ff" fill-opacity="0.22"/><circle cx="16.5" cy="123.3" r="0.7" fill="#dfe6ff" fill-opacity="0.38"/><circle cx="615.6" cy="29.9" r="0.6" fill="#dfe6ff" fill-opacity="0.29"/><circle cx="140.1" cy="7.3" r="0.8" fill="#dfe6ff" fill-opacity="0.30"/><circle cx="19.0" cy="219.0" r="0.6" fill="#dfe6ff" fill-opacity="0.22"/><circle cx="12.9" cy="85.9" r="0.8" fill="#dfe6ff" fill-opacity="0.27"/><circle cx="19.5" cy="238.8" r="0.7" fill="#dfe6ff" fill-opacity="0.19"/><circle cx="682.1" cy="24.1" r="0.7" fill="#dfe6ff" fill-opacity="0.39"/><circle cx="43.9" cy="227.2" r="0.5" fill="#dfe6ff" fill-opacity="0.23"/><circle cx="147.4" cy="34.3" r="0.7" fill="#dfe6ff" fill-opacity="0.33"/><circle cx="36.4" cy="510.6" r="0.5" fill="#dfe6ff" fill-opacity="0.31"/><circle cx="1429.3" cy="88.0" r="0.5" fill="#dfe6ff" fill-opacity="0.26"/><circle cx="10.5" cy="181.7" r="0.8" fill="#dfe6ff" fill-opacity="0.39"/><circle cx="702.7" cy="9.0" r="0.7" fill="#dfe6ff" fill-opacity="0.30"/><circle cx="614.3" cy="3.6" r="0.5" fill="#dfe6ff" fill-opacity="0.22"/><circle cx="25.4" cy="195.0" r="0.8" fill="#dfe6ff" fill-opacity="0.28"/><circle cx="195.3" cy="26.8" r="0.5" fill="#dfe6ff" fill-opacity="0.19"/><circle cx="1401.3" cy="308.8" r="0.5" fill="#dfe6ff" fill-opacity="0.30"/><circle cx="903.7" cy="12.9" r="0.7" fill="#dfe6ff" fill-opacity="0.32"/><circle cx="1462.0" cy="404.5" r="0.5" fill="#dfe6ff" fill-opacity="0.29"/><circle cx="1441.9" cy="118.4" r="0.8" fill="#dfe6ff" fill-opacity="0.39"/><circle cx="1457.7" cy="333.0" r="0.8" fill="#dfe6ff" fill-opacity="0.18"/><circle cx="69.1" cy="6.9" r="0.7" fill="#dfe6ff" fill-opacity="0.18"/><circle cx="247.5" cy="24.7" r="0.7" fill="#dfe6ff" fill-opacity="0.18"/><circle cx="613.5" cy="21.2" r="0.8" fill="#dfe6ff" fill-opacity="0.18"/><circle cx="1399.9" cy="170.5" r="0.6" fill="#dfe6ff" fill-opacity="0.27"/><circle cx="10.6" cy="263.6" r="0.7" fill="#dfe6ff" fill-opacity="0.17"/><circle cx="28.5" cy="327.5" r="0.8" fill="#dfe6ff" fill-opacity="0.15"/><circle cx="1453.5" cy="224.2" r="0.6" fill="#dfe6ff" fill-opacity="0.29"/><circle cx="22.9" cy="378.3" r="0.8" fill="#dfe6ff" fill-opacity="0.43"/><circle cx="176.5" cy="7.1" r="0.6" fill="#dfe6ff" fill-opacity="0.42"/><circle cx="7.6" cy="36.2" r="0.7" fill="#dfe6ff" fill-opacity="0.18"/><circle cx="1240.7" cy="23.1" r="0.7" fill="#dfe6ff" fill-opacity="0.28"/><circle cx="24.3" cy="219.6" r="0.8" fill="#dfe6ff" fill-opacity="0.30"/><circle cx="1456.3" cy="506.5" r="0.6" fill="#dfe6ff" fill-opacity="0.20"/><circle cx="29.3" cy="485.9" r="0.5" fill="#dfe6ff" fill-opacity="0.42"/><circle cx="11.7" cy="210.3" r="0.5" fill="#dfe6ff" fill-opacity="0.25"/><circle cx="455.8" cy="5.9" r="0.8" fill="#dfe6ff" fill-opacity="0.25"/><circle cx="499.9" cy="19.1" r="0.6" fill="#dfe6ff" fill-opacity="0.21"/><circle cx="1461.0" cy="138.3" r="0.8" fill="#dfe6ff" fill-opacity="0.24"/><circle cx="1446.6" cy="187.5" r="0.8" fill="#dfe6ff" fill-opacity="0.30"/><circle cx="146.9" cy="41.7" r="0.5" fill="#dfe6ff" fill-opacity="0.43"/><circle cx="49.9" cy="490.4" r="0.6" fill="#dfe6ff" fill-opacity="0.41"/><circle cx="1362.3" cy="9.6" r="0.8" fill="#dfe6ff" fill-opacity="0.24"/><circle cx="43.6" cy="367.7" r="0.6" fill="#dfe6ff" fill-opacity="0.18"/><circle cx="42.1" cy="59.0" r="0.7" fill="#dfe6ff" fill-opacity="0.24"/><circle cx="613.5" cy="40.5" r="0.8" fill="#dfe6ff" fill-opacity="0.17"/><circle cx="1071.3" cy="14.6" r="0.6" fill="#dfe6ff" fill-opacity="0.30"/><circle cx="1416.5" cy="172.0" r="0.7" fill="#dfe6ff" fill-opacity="0.27"/><circle cx="15.1" cy="51.0" r="0.5" fill="#dfe6ff" fill-opacity="0.25"/><circle cx="19.6" cy="171.8" r="0.5" fill="#dfe6ff" fill-opacity="0.15"/><circle cx="1406.0" cy="156.3" r="0.8" fill="#dfe6ff" fill-opacity="0.33"/><circle cx="1397.0" cy="46.6" r="0.6" fill="#dfe6ff" fill-opacity="0.16"/><circle cx="1150.5" cy="23.9" r="0.8" fill="#dfe6ff" fill-opacity="0.18"/><circle cx="395.0" cy="16.8" r="0.6" fill="#dfe6ff" fill-opacity="0.35"/><circle cx="27.7" cy="319.2" r="0.5" fill="#dfe6ff" fill-opacity="0.40"/><circle cx="1432.6" cy="309.5" r="0.5" fill="#dfe6ff" fill-opacity="0.33"/><circle cx="10.7" cy="25.0" r="0.7" fill="#dfe6ff" fill-opacity="0.19"/><circle cx="1429.2" cy="393.8" r="0.7" fill="#dfe6ff" fill-opacity="0.40"/><circle cx="17.1" cy="469.5" r="0.8" fill="#dfe6ff" fill-opacity="0.41"/><circle cx="1414.3" cy="81.6" r="0.8" fill="#dfe6ff" fill-opacity="0.37"/><circle cx="1369.5" cy="22.7" r="0.5" fill="#dfe6ff" fill-opacity="0.28"/><circle cx="250.1" cy="24.9" r="0.8" fill="#dfe6ff" fill-opacity="0.43"/><circle cx="652.8" cy="11.8" r="0.5" fill="#dfe6ff" fill-opacity="0.20"/><circle cx="754.5" cy="22.6" r="0.6" fill="#dfe6ff" fill-opacity="0.33"/><circle cx="1460.2" cy="475.8" r="0.6" fill="#dfe6ff" fill-opacity="0.36"/><circle cx="1337.8" cy="20.7" r="0.7" fill="#dfe6ff" fill-opacity="0.35"/><circle cx="956.7" cy="5.6" r="0.6" fill="#dfe6ff" fill-opacity="0.45"/><circle cx="1461.1" cy="357.0" r="0.5" fill="#dfe6ff" fill-opacity="0.22"/><circle cx="1457.8" cy="168.6" r="0.5" fill="#dfe6ff" fill-opacity="0.28"/><circle cx="1327.8" cy="25.0" r="0.6" fill="#dfe6ff" fill-opacity="0.37"/><circle cx="1430.7" cy="172.4" r="0.7" fill="#dfe6ff" fill-opacity="0.37"/><circle cx="377.0" cy="40.9" r="0.6" fill="#dfe6ff" fill-opacity="0.22"/></svg>
<div id="win">
  <div id="title">
    <div class="tl" style="left:8px"></div>
    <div class="tl" style="left:28px"></div>
    <div class="tl" style="left:48px"></div>
    <div class="abs" style="left:613px;top:3px;font-size:14px;line-height:16px;color:#9a9a9a;white-space:nowrap">objc-runtime-new.mm</div>
  </div>
  <div id="sidebar">
    <div id="navbar"></div>
  </div>
  <div id="jump"></div>
  <div id="editor">
    <div id="gutter"></div>
    <div id="fold"></div>
    <div id="scroll"></div>

<div class="abs" style="left:39px;top:322px;width:8px;height:92px;background:#6b7081"></div>
<div class="abs" style="left:39px;top:414px;width:8px;height:23px;background:#4f535e"></div>
<div class="abs" style="left:47px;top:161px;width:933px;height:22px;background:#5e7a66"></div>
<div class="abs" style="left:941px;top:161px;width:39px;height:22px;background:#6b8571"></div>
<svg class="abs" style="left:0;top:138px" width="60" height="22"><polygon points="0,0 40,0 49,11 40,22 0,22" fill="#5884c5"/></svg>
<svg class="abs" style="left:39px;top:161px" width="20" height="22"><polygon points="0,0 8,0 15,11 8,22 0,22" fill="#c6dcb4"/></svg>
<svg class="abs" style="left:761px;top:161px" width="180" height="22"><polygon points="0,11 8,0 180,0 180,22 8,22" fill="#c6dcb4"/></svg>
<div class="abs" style="left:776px;top:162px;height:22px;line-height:22px;font-size:15px;color:#111;white-space:nowrap">Thread 1: breakpoint 3.1</div>
<div class="ln" style="top:0px">4658</div>
<div class="code" style="top:0px"><span class="cm">*   must be converted to _objc_msgForward or _objc_msgForward_stret.</span></div>
<div class="ln" style="top:23px">4659</div>
<div class="code" style="top:23px"><span class="cm">*   If you don't want forwarding at all, use lookUpImpOrNil() instead.</span></div>
<div class="ln" style="top:46px">4660</div>
<div class="code" style="top:46px"><span class="cm">**********************************************************************/</span></div>
<div class="ln" style="top:69px">4661</div>
<div class="code" style="top:69px"><span class="kw">IMP</span> lookUpImpOrForward(Class cls, <span class="kw">SEL</span> sel, <span class="kw">id</span> inst,</div>
<div class="ln" style="top:92px">4662</div>
<div class="code" style="top:92px">                       <span class="kw">bool</span> initialize, <span class="kw">bool</span> cache, <span class="kw">bool</span> resolver)</div>
<div class="ln" style="top:115px">4663</div>
<div class="code" style="top:115px">{</div>
<div class="ln" style="top:138px;color:#fff">4664</div>
<div class="code" style="top:138px">    Class curClass;</div>
<div class="ln" style="top:161px">4665</div>
<div class="code" style="top:161px">    <span class="kw">IMP</span> imp = <span class="kw">nil</span>;</div>
<div class="ln" style="top:184px">4666</div>
<div class="code" style="top:184px">    <span class="ty">Method</span> meth;</div>
<div class="ln" style="top:207px">4667</div>
<div class="code" style="top:207px">    <span class="kw">bool</span> triedResolver = <span class="kw">NO</span>;</div>
<div class="ln" style="top:230px">4668</div>
<div class="code" style="top:230px"></div>
<div class="ln" style="top:253px">4669</div>
<div class="code" style="top:253px">    <span class="ty">runtimeLock</span>.assertUnlocked();</div>
<div class="ln" style="top:276px">4670</div>
<div class="code" style="top:276px"></div>
<div class="ln" style="top:299px">4671</div>
<div class="code" style="top:299px">    <span class="cm">// Optimistic cache lookup</span></div>
<div class="ln" style="top:322px">4672</div>
<div class="code" style="top:322px">    <span class="kw">if</span> (cache) {</div>
<div class="ln" style="top:345px">4673</div>
<div class="code" style="top:345px">        imp = cache_getImp(cls, sel);</div>
<div class="ln" style="top:368px">4674</div>
<div class="code" style="top:368px">        <span class="kw">if</span> (imp) <span class="kw">return</span> imp;</div>
<div class="ln" style="top:391px">4675</div>
<div class="code" style="top:391px">    }</div>
<div class="ln" style="top:414px">4676</div>
<div class="code" style="top:414px"></div>
<div class="ln" style="top:437px">4677</div>
<div class="code" style="top:437px">    <span class="kw">if</span> (!cls-&gt;isRealized()) {</div>
  </div>
  <div id="dbar"></div>
  <div id="vars"></div>
  <div id="console"></div>
  <div id="cbar"></div>
</div>

<div id="ov" class="abs" style="left:0;top:0;width:1465px;height:917px">

<!-- title icon -->
<svg class="abs" style="left:646px;top:46px" width="14" height="16"><path d="M1.5 0.5h8l3 3v11.5h-11z" fill="#fff" stroke="#d0d0d0"/><text x="1.5" y="14" font-family="Liberation Sans" font-size="11" font-weight="bold" fill="#6e44b3">m</text></svg>
<!-- jump bar -->
<svg class="abs" style="left:415px;top:65px" width="980" height="28" fill="none" stroke="#777" stroke-width="1.1">
 <rect x="6.5" y="8.5" width="5" height="5"/><rect x="13.5" y="8.5" width="5" height="5"/><rect x="6.5" y="15.5" width="5" height="5"/><rect x="13.5" y="15.5" width="5" height="5"/>
 <path d="M27.5 6v16 M80.5 6v16" stroke="#999"/>
 <path d="M44 8.5l-6 6l6 6" stroke="#a8a8a8" stroke-width="1.2"/>
 <path d="M65.5 8.5l6 6l-6 6" stroke="#cfcfcf" stroke-width="1.2"/>
 <path d="M134 8l3.5 6.5l-3.5 6.5 M202 8l3.5 6.5l-3.5 6.5 M350 8l3.5 6.5l-3.5 6.5" stroke="#bdbdbd" stroke-width="0.9"/>
 <path d="M920.5 6v16" stroke="#999"/>
 <path d="M936 8.5l-5 6l5 6" stroke="#9a9a9a" stroke-width="1.2"/>
 <path d="M966 8.5l5 6l-5 6" stroke="#9a9a9a" stroke-width="1.2"/>
</svg>
<svg class="abs" style="left:504px;top:71px" width="14" height="17"><path d="M1.5 1.5h7l3 3v11h-10z" fill="#dce9fb" stroke="#4f8ee8"/><rect x="3.5" y="6" width="5.5" height="6" fill="none" stroke="#4f8ee8" stroke-width="0.9"/><path d="M3 14h7" stroke="#4f8ee8"/></svg>
<svg class="abs" style="left:555px;top:71px" width="18" height="16"><path d="M0.5 1.5h6l1.5 2h9.5v12h-17z" fill="#f6d66f" stroke="#e4bd4c"/><path d="M0.5 5h17" stroke="#e9c659"/></svg>
<svg class="abs" style="left:625px;top:71px" width="14" height="17"><path d="M1.5 0.5h8l3 3v12.5h-11z" fill="#fff" stroke="#cfcfcf"/><text x="1.8" y="14" font-family="Liberation Sans" font-size="11" font-weight="bold" fill="#6e44b3">m</text></svg>
<svg class="abs" style="left:772px;top:71px" width="16" height="16"><rect x="1" y="1" width="13" height="14" rx="2" fill="#9cc6a5" stroke="#88b893"/><text x="4.2" y="12.5" font-family="Liberation Serif" font-style="italic" font-weight="bold" font-size="12" fill="#fff">f</text></svg>
<svg class="abs" style="left:1358px;top:71px" width="16" height="16"><path d="M7.5 1.5l6.2 11.5h-12.4z" fill="#f2b51f" stroke="#eaa914" stroke-width="1" stroke-linejoin="round"/><path d="M7.5 5.2v4 M7.5 10.3v1.3" stroke="#fff" stroke-width="1.5"/></svg>
<div class="abs" style="left:522px;top:71px;font-size:12px;line-height:16px;color:#4c4c4c;white-space:nowrap">objc</div>
<div class="abs" style="left:576px;top:71px;font-size:11.4px;line-height:16px;color:#4c4c4c;white-space:nowrap">Source</div>
<div class="abs" style="left:644px;top:71px;font-size:12px;line-height:16px;color:#4c4c4c;white-space:nowrap">objc-runtime-new.mm</div>
<div class="abs" style="left:792px;top:71px;font-size:11.7px;line-height:16px;color:#4c4c4c;white-space:nowrap">lookUpImpOrForward(Class cls, SEL sel, id inst, bool initialize, bool cache, bool resolver)</div>

<!-- debug bar -->
<svg class="abs" style="left:415px;top:546px" width="560" height="30" fill="none" stroke="#9a9a9a" stroke-width="1">
 <rect x="9.5" y="8.5" width="14" height="12"/><path d="M13 12.5h7l-3.5 4z"/>
 <path d="M41.5 10.5h10.5l3.5 4l-3.5 4h-10.5z" fill="#93b4f3" stroke="#93b4f3"/>
 <path d="M73.5 8.5h3v12h-3z M80.5 8.5l8.5 6l-8.5 6z"/>
 <path d="M106 15l6-5.5l5 4.5 M114.5 14.5h4v-4 M108.5 17.5h9v2.5h-9z"/>
 <path d="M144.5 7v10 M140.5 13.5l4 4l4-4 M139.5 19.5h10v2.5h-10z"/>
 <path d="M175.5 19v-11 M171.5 11.5l4-4l4 4 M170.5 19.5h10v2.5h-10z"/>
 <path d="M191.5 6v17 M223.5 6v17" stroke="#9a9a9a"/>
 <path d="M199 15l14-7l-5.5 14l-1.5-5.5z" stroke="#333" stroke-width="1.1" stroke-linejoin="round"/>
 <path d="M317 9l3.5 6l-3.5 6 M392 9l3.5 6l-3.5 6" stroke="#bdbdbd" stroke-width="0.9"/>
</svg>
<svg class="abs" style="left:646px;top:555px" width="15" height="13"><rect x="0" y="0.5" width="14" height="10" fill="#333" stroke="#222" stroke-width="0.6"/><rect x="0" y="10.5" width="14" height="1.8" fill="#a9a9a9"/><path d="M2.5 2.6h1 M4.5 2.6h1 M6.5 2.6h1" stroke="#3fc13f" stroke-width="1"/></svg>
<svg class="abs" style="left:736px;top:552px" width="17" height="16"><circle cx="8.5" cy="8" r="7" fill="#8fb0e6" stroke="#5d86cc" stroke-width="1"/><path d="M6 4v8 M8.5 3.5v9 M11 4v8" stroke="#fff" stroke-width="1.1"/></svg>
<svg class="abs" style="left:815px;top:552px" width="16" height="16"><rect x="1.5" y="1.5" width="13" height="13" fill="#93b1e3" stroke="#5f8bd6"/><path d="M8 3.8c1.4 0 2.3 1.1 2.3 2.6c0 1.3-0.6 2.6-1.2 3.1c2.2 0.6 3.6 1.6 4 3.7h-10.2c0.4-2.1 1.8-3.1 4-3.7c-0.6-0.5-1.2-1.8-1.2-3.1c0-1.5 0.9-2.6 2.3-2.6z" fill="#eef3fb"/></svg>
<div class="abs" style="left:665px;top:552px;font-size:12px;line-height:16px;color:#555;white-space:nowrap">debug-objc</div>
<div class="abs" style="left:757px;top:552px;font-size:11.6px;line-height:16px;color:#555;white-space:nowrap">Thread 1</div>
<div class="abs" style="left:834px;top:552px;font-size:11.6px;line-height:16px;color:#555;white-space:nowrap">0 lookUpImpOrForward</div>
<!-- variables -->
<svg class="abs" style="left:435px;top:576px" width="16" height="16"><rect x="1.5" y="1.5" width="13" height="13" rx="1.5" fill="#b9a8de" stroke="#a792d3" stroke-width="1"/><text x="8" y="12.6" text-anchor="middle" font-family="Liberation Sans" font-size="12" font-weight="bold" fill="#fff" stroke="#8a76c0" stroke-width="0.3">A</text></svg>
<div class="abs" style="left:454px;top:576px;font-size:11.6px;line-height:16px;color:#111;white-space:nowrap"><b style="font-size:12px">cache</b> <span style="color:#444">=</span> <span style="color:#8c8c8c">(bool)</span> false</div>
<svg class="abs" style="left:435px;top:594px" width="16" height="16"><rect x="1.5" y="1.5" width="13" height="13" rx="1.5" fill="#b9a8de" stroke="#a792d3" stroke-width="1"/><text x="8" y="12.6" text-anchor="middle" font-family="Liberation Sans" font-size="12" font-weight="bold" fill="#fff" stroke="#8a76c0" stroke-width="0.3">A</text></svg>
<svg class="abs" style="left:423px;top:597px" width="10" height="10"><polygon points="1,0 8,4.5 1,9" fill="#7a7a7a"/></svg>
<div class="abs" style="left:454px;top:594px;font-size:11.6px;line-height:16px;color:#111;white-space:nowrap"><b style="font-size:12px">sel</b> <span style="color:#444">=</span> <span style="color:#8c8c8c">(SEL)</span> "hello"</div>
<svg class="abs" style="left:435px;top:612px" width="16" height="16"><rect x="1.5" y="1.5" width="13" height="13" rx="1.5" fill="#b9a8de" stroke="#a792d3" stroke-width="1"/><text x="8" y="12.6" text-anchor="middle" font-family="Liberation Sans" font-size="12" font-weight="bold" fill="#fff" stroke="#8a76c0" stroke-width="0.3">A</text></svg>
<div class="abs" style="left:454px;top:612px;font-size:11.6px;line-height:16px;color:#111;white-space:nowrap"><b style="font-size:12px">resolver</b> <span style="color:#444">=</span> <span style="color:#8c8c8c">(bool)</span> true</div>
<svg class="abs" style="left:435px;top:630px" width="16" height="16"><rect x="1.5" y="1.5" width="13" height="13" rx="1.5" fill="#b9a8de" stroke="#a792d3" stroke-width="1"/><text x="8" y="12.6" text-anchor="middle" font-family="Liberation Sans" font-size="12" font-weight="bold" fill="#fff" stroke="#8a76c0" stroke-width="0.3">A</text></svg>
<div class="abs" style="left:454px;top:630px;font-size:11.6px;line-height:16px;color:#111;white-space:nowrap"><b style="font-size:12px">cls</b> <span style="color:#444">=</span> <span style="color:#8c8c8c">(Class)</span> XXObject</div>
<svg class="abs" style="left:435px;top:648px" width="16" height="16"><rect x="1.5" y="1.5" width="13" height="13" rx="1.5" fill="#b9a8de" stroke="#a792d3" stroke-width="1"/><text x="8" y="12.6" text-anchor="middle" font-family="Liberation Sans" font-size="12" font-weight="bold" fill="#fff" stroke="#8a76c0" stroke-width="0.3">A</text></svg>
<div class="abs" style="left:454px;top:648px;font-size:11.6px;line-height:16px;color:#111;white-space:nowrap"><b style="font-size:12px">initialize</b> <span style="color:#444">=</span> <span style="color:#8c8c8c">(bool)</span> true</div>
<svg class="abs" style="left:435px;top:666px" width="16" height="16"><rect x="1.5" y="1.5" width="13" height="13" rx="1.5" fill="#b9a8de" stroke="#a792d3" stroke-width="1"/><text x="8" y="12.6" text-anchor="middle" font-family="Liberation Sans" font-size="12" font-weight="bold" fill="#fff" stroke="#8a76c0" stroke-width="0.3">A</text></svg>
<svg class="abs" style="left:423px;top:669px" width="10" height="10"><polygon points="1,0 8,4.5 1,9" fill="#7a7a7a"/></svg>
<div class="abs" style="left:454px;top:666px;font-size:11.6px;line-height:16px;color:#111;white-space:nowrap"><b style="font-size:12px">inst</b> <span style="color:#444">=</span> <span style="color:#8c8c8c">(XXObject *)</span> 0x102000480</div>
<svg class="abs" style="left:435px;top:684px" width="16" height="16"><rect x="1.5" y="1.5" width="13" height="13" rx="1.5" fill="#8fc393" stroke="#6fae73" stroke-width="1"/><text x="8" y="12.6" text-anchor="middle" font-family="Liberation Sans" font-size="12" font-weight="bold" fill="#fff" stroke="#8a76c0" stroke-width="0.3">L</text></svg>
<svg class="abs" style="left:423px;top:687px" width="10" height="10"><polygon points="1,0 8,4.5 1,9" fill="#7a7a7a"/></svg>
<div class="abs" style="left:454px;top:684px;font-size:11.6px;line-height:16px;color:#111;white-space:nowrap"><b style="font-size:12px">imp</b> <span style="color:#444">=</span> <span style="color:#8c8c8c">(IMP)</span> (libobjc.A.dylib`_objc_opt_data + 1226)</div>
<svg class="abs" style="left:435px;top:702px" width="16" height="16"><rect x="1.5" y="1.5" width="13" height="13" rx="1.5" fill="#8fc393" stroke="#6fae73" stroke-width="1"/><text x="8" y="12.6" text-anchor="middle" font-family="Liberation Sans" font-size="12" font-weight="bold" fill="#fff" stroke="#8a76c0" stroke-width="0.3">L</text></svg>
<div class="abs" style="left:454px;top:702px;font-size:11.6px;line-height:16px;color:#111;white-space:nowrap"><b style="font-size:12px">curClass</b> <span style="color:#444">=</span> <span style="color:#8c8c8c">(Class)</span> NSObject</div>

<!-- console -->
<div class="abs mono13" style="left:887px;top:580px">warning: could not load any Objective-C class information from
the dyld shared cache. This will significantly reduce the
quality of type information available.
<b style="color:#d9a4cf">(lldb)</b></div>

<!-- bottom bars -->
<div class="abs" style="left:57.5px;top:853px;width:351px;height:22px;border:1px solid #d3d3d3;border-radius:4px;background:#f5f5f5"></div>
<svg class="abs" style="left:60px;top:856px" width="18" height="18"><circle cx="8.5" cy="8.5" r="6" fill="none" stroke="#7a7a7a" stroke-width="1.1"/><path d="M4.8 8c0.5-2.5 2-3.8 3.7-3.8s3.2 1.3 3.7 3.8z" fill="#6f6f6f"/></svg>
<div class="abs" style="left:79px;top:856px;font-size:12px;line-height:16px;color:#b5b5b5">Filter</div>
<svg class="abs" style="left:354px;top:856px" width="52" height="18" fill="none">
 <path d="M2 2.7h13 M2 14.2h13" stroke="#8db3f6" stroke-width="1.6"/><rect x="5.8" y="5.8" width="5.4" height="5.4" stroke="#8db3f6" stroke-width="1.8"/>
 <rect x="19.75" y="2.4" width="11.7" height="12.2" stroke="#6e6e6e" stroke-width="1.1"/>
 <rect x="22" y="4.4" width="8" height="2.3" rx="0.6" stroke="#6e6e6e" stroke-width="1"/><path d="M23.1 6.7v3.6 M28.9 6.7v3.6" stroke="#6e6e6e" stroke-width="1"/>
 <rect x="21.8" y="10.4" width="2.3" height="2.6" stroke="#6e6e6e" stroke-width="0.9"/><rect x="27.8" y="10.4" width="2.3" height="2.6" stroke="#6e6e6e" stroke-width="0.9"/>
 <rect x="36.75" y="2.4" width="11.7" height="12.2" stroke="#6e6e6e" stroke-width="1.1"/>
 <rect x="41" y="4.6" width="3.6" height="3.8" stroke="#6e6e6e" stroke-width="1"/><rect x="38.8" y="8.4" width="4" height="4" stroke="#6e6e6e" stroke-width="1"/><rect x="42.8" y="8.4" width="4" height="4" stroke="#6e6e6e" stroke-width="1"/>
</svg>
<div class="abs" style="left:425px;top:856px;font-size:12px;line-height:16px;color:#222">Auto</div>
<svg class="abs" style="left:450px;top:855px" width="62" height="18" fill="none" stroke="#444" stroke-width="1.2">
 <path d="M3.5 6.5l3-3l3 3 M3.5 11.5l3 3l3-3"/>
 <path d="M17.5 2.5v13" stroke="#c9c9c9"/>
 <path d="M24.5 9c2-3.3 4.5-4.8 7.5-4.8s5.5 1.5 7.5 4.8c-2 3.3-4.5 4.8-7.5 4.8s-5.5-1.5-7.5-4.8z" stroke="#c4c4c4" stroke-width="1"/><circle cx="32" cy="9" r="2" stroke="#c4c4c4" stroke-width="1"/>
 <circle cx="52.5" cy="9" r="6.3" stroke="#c4c4c4" stroke-width="1"/><path d="M52.5 7.5v5 M52.5 5v1" stroke="#c4c4c4" stroke-width="1.1"/>
</svg>
<div class="abs" style="left:703.5px;top:853.5px;width:172px;height:21px;border:1px solid #d3d3d3;border-radius:4px;background:#fff"></div>
<svg class="abs" style="left:706px;top:856px" width="18" height="18"><circle cx="8.5" cy="8.5" r="6" fill="none" stroke="#7a7a7a" stroke-width="1.1"/><path d="M4.8 8c0.5-2.5 2-3.8 3.7-3.8s3.2 1.3 3.7 3.8z" fill="#6f6f6f"/></svg>
<div class="abs" style="left:725px;top:856px;font-size:12px;line-height:16px;color:#b5b5b5">Filter</div>
<div class="abs" style="left:893px;top:856px;font-size:12px;line-height:16px;color:#222;white-space:nowrap">All Output</div>
<svg class="abs" style="left:946px;top:855px" width="14" height="18" fill="none" stroke="#444" stroke-width="1.2"><path d="M3.5 6.5l3-3l3 3 M3.5 11.5l3 3l3-3"/></svg>
<svg class="abs" style="left:1328px;top:854px" width="66" height="20" fill="none">
 <path d="M2 4.5h13 M6.5 4.5v-2h4v2 M3.5 4.5l1.2 12h8l1.2-12 M6.5 7v7.5 M8.5 7v7.5 M10.5 7v7.5" stroke="#7a7a7a" stroke-width="1"/>
 <path d="M22.5 3v13" stroke="#c6c6c6"/>
 <rect x="28.75" y="2.75" width="14" height="14" stroke="#8db3f6" stroke-width="1.5"/><path d="M31.7 5.5v8.5" stroke="#8db3f6" stroke-width="1.8"/>
 <rect x="46.75" y="2.75" width="14" height="14" stroke="#8db3f6" stroke-width="1.5"/><path d="M57.2 5.5v8.5" stroke="#8db3f6" stroke-width="1.8"/>
</svg>
<!-- navigator icons -->
<svg class="abs" style="left:0;top:65px" width="362" height="28" fill="none" stroke="#9b9b9b" stroke-width="1.2">
 <path d="M122.5 9.5h5l1.5 1.5h6v9.5h-12.5z M122.5 12.5h12.5"/>
 <path d="M152.5 9.5h12v4h-12z M158.5 13.5v3 M154.5 16.5h8 M154.5 16.5v2 M162.5 16.5v2 M152.5 18.5h4v3h-4z M160.5 18.5h4v3h-4z"/>
 <circle cx="187" cy="13.5" r="4.8"/><path d="M190.5 17l3.5 3.5"/>
 <path d="M218.5 8.5l6.5 12.5h-13z M218.5 12.5v5 M218.5 18.8v1"/>
 <path d="M248.5 7.5l6.5 6.5l-6.5 6.5l-6.5-6.5z M246 14h5"/>
 <path d="M302.5 11.5h9.5l3.5 3.5l-3.5 3.5h-9.5z"/>
 <path d="M332.5 8.5h12.5v9h-8l-2.5 2.5v-2.5h-2z M335 11.5h7.5 M335 14h7.5"/>
</svg>
<svg class="abs" style="left:0;top:65px" width="362" height="28" fill="#7ea6f0">
 <rect x="271" y="8" width="15" height="1.6"/><rect x="271" y="19.5" width="15" height="1.6"/>
 <rect x="272" y="11.5" width="3" height="1.2"/><rect x="277" y="11.5" width="3" height="1.2"/><rect x="282" y="11.5" width="3" height="1.2"/>
 <rect x="272" y="14" width="3" height="1.2"/><rect x="277" y="14" width="3" height="1.2"/><rect x="282" y="14" width="3" height="1.2"/>
 <rect x="272" y="16.5" width="3" height="1.2"/><rect x="277" y="16.5" width="3" height="1.2"/><rect x="282" y="16.5" width="3" height="1.2"/>
</svg>
<!-- process row -->
<svg class="abs" style="left:58px;top:105px" width="10" height="8"><polygon points="0,0 9,0 4.5,7.5" fill="#7f7f7f"/></svg>
<svg class="abs" style="left:71px;top:102px" width="15" height="14"><rect x="0" y="0.5" width="14" height="11" fill="#1f1f1f" stroke="#111" stroke-width="0.6"/><rect x="0" y="11.5" width="14" height="1.8" fill="#a9a9a9"/><path d="M2.5 2.6h1 M4.5 2.6h1 M6.5 2.6h1" stroke="#3fd13f" stroke-width="1"/></svg>
<div class="abs" style="left:89px;top:100px;font-size:12px;line-height:16px;white-space:nowrap"><b style="color:#333">debug-objc</b> <span style="color:#888;font-size:11.6px">PID 4014</span></div>
<svg class="abs" style="left:360px;top:100px" width="42" height="18" fill="none">
 <circle cx="9" cy="8.5" r="6.5" stroke="#7ea6f0" stroke-width="1.4"/><path d="M9 11l2.5-5" stroke="#7ea6f0" stroke-width="1"/><circle cx="8.7" cy="11" r="1" fill="#7ea6f0"/>
 <circle cx="31.5" cy="8.5" r="6" stroke="#666" stroke-width="1.1"/><path d="M29.5 5v7 M31.5 4.5v8 M33.5 5v7" stroke="#666" stroke-width="0.9"/>
</svg>
<div class="abs" style="left:92px;top:126px;font-size:11.6px;line-height:16px;color:#1c1c1c;white-space:nowrap">CPU</div>
<div class="abs" style="left:92px;top:155px;font-size:11.6px;line-height:16px;color:#1c1c1c;white-space:nowrap">Memory</div>
<div class="abs" style="left:92px;top:184px;font-size:11.6px;line-height:16px;color:#1c1c1c;white-space:nowrap">Energy Impact</div>
<div class="abs" style="left:92px;top:213px;font-size:11.6px;line-height:16px;color:#1c1c1c;white-space:nowrap">Disk</div>
<div class="abs" style="left:300px;width:100px;text-align:right;top:213px;font-size:11.6px;line-height:16px;color:#555;white-space:nowrap">Zero KB/s</div>
<div class="abs" style="left:92px;top:242px;font-size:11.6px;line-height:16px;color:#1c1c1c;white-space:nowrap">Network</div>
<div class="abs" style="left:300px;width:100px;text-align:right;top:242px;font-size:11.6px;line-height:16px;color:#555;white-space:nowrap">Zero KB/s</div>
<div class="abs" style="left:70px;top:151px;width:330px;height:1px;background:#dedede"></div>
<div class="abs" style="left:70px;top:180px;width:330px;height:1px;background:#dedede"></div>
<div class="abs" style="left:70px;top:209px;width:330px;height:1px;background:#dedede"></div>
<div class="abs" style="left:70px;top:238px;width:330px;height:1px;background:#dedede"></div>
<div class="abs" style="left:70px;top:267px;width:330px;height:1px;background:#dedede"></div>

<svg class="abs" style="left:66px;top:124px" width="24" height="140" fill="none" stroke="#4b5672" stroke-width="1.2">
 <rect x="4.6" y="3.6" width="13.6" height="13.6" rx="2.5" fill="#f2f3f6"/>
 <rect x="6.8" y="5.8" width="9.2" height="9.2" rx="1" fill="#cdd1da" stroke-width="0.9"/>
 <rect x="9" y="8" width="4.8" height="4.8" fill="#7f879a" stroke="none"/>
 <path d="M8.2 8.5h1 M8.2 10.4h1 M8.2 12.3h1 M13.6 8.5h1 M13.6 10.4h1 M13.6 12.3h1 M9.5 7h1 M11.4 7h1 M13.3 7h0.3" stroke="#7f879a" stroke-width="0.6"/>
 <rect x="4.6" y="36.2" width="13.6" height="8.4" rx="0.8" fill="#c8ccd6"/>
 <path d="M5.2 34.9h12.4 M5.2 46h12.4" stroke-width="1.8" stroke-dasharray="1.1 0.9"/>
 <rect x="4.6" y="65.4" width="12.6" height="7.2" rx="0.8" fill="#d0d3db"/>
 <path d="M7 65.6v6.8" stroke-width="0.9"/><rect x="17.4" y="67.4" width="1.8" height="3.4" fill="#4b5672" stroke="none"/>
 <rect x="5.6" y="90.6" width="13.2" height="15" rx="1.6" fill="#eceef2"/>
 <path d="M8 93h4.5" stroke-width="1"/>
 <path d="M15.5 93.5c1.2 2.5 0.5 5-3.5 6.2s-6.5-0.7-5.8-2.5" stroke-width="0.7"/><ellipse cx="11.8" cy="97.5" rx="2.2" ry="1.2" stroke-width="0.8"/>
 <rect x="6.2" y="102.2" width="12" height="3.2" fill="#aeb4c2" stroke="none"/>
 <circle cx="11.9" cy="126.9" r="6.6" fill="#8e96a8"/>
 <path d="M8.5 123.5l3 1.5l2.5-2 M9 127.5l3-1l2 2.5 M11 130l1.5-2" stroke="#e8ebf0" stroke-width="0.8"/>
</svg>

<!-- thread row -->
<svg class="abs" style="left:72px;top:275px" width="10" height="8"><polygon points="0,0 9,0 4.5,7.5" fill="#7f7f7f"/></svg>
<svg class="abs" style="left:83px;top:270px" width="16" height="16"><circle cx="8" cy="8" r="6.8" fill="#8fb0e6" stroke="#5d86cc" stroke-width="1"/><path d="M5.5 4v8 M8 3.5v9 M10.5 4v8" stroke="#fff" stroke-width="1.1"/></svg>
<div class="abs" style="left:103px;top:270px;font-size:11.6px;line-height:16px;color:#222;white-space:nowrap">Thread 1 <span style="color:#8a8a8a">Queue: com.apple.main-thread (serial)</span></div>
<svg class="abs" style="left:54px;top:290px" width="10" height="18"><polygon points="0,0 4.5,0 8,7.5 4.5,16 0,16" fill="#a8a8a8"/></svg>
<svg class="abs" style="left:98px;top:290px" width="16" height="16"><rect x="1.5" y="1.5" width="13" height="13" fill="#93b1e3" stroke="#5f8bd6"/><path d="M8 3.8c1.4 0 2.3 1.1 2.3 2.6c0 1.3-0.6 2.6-1.2 3.1c2.2 0.6 3.6 1.6 4 3.7h-10.2c0.4-2.1 1.8-3.1 4-3.7c-0.6-0.5-1.2-1.8-1.2-3.1c0-1.5 0.9-2.6 2.3-2.6z" fill="#eef3fb"/></svg>
<div class="abs" style="left:117px;top:290px;font-size:11.6px;line-height:16px;color:#222;white-space:nowrap">0 lookUpImpOrForward</div>
<svg class="abs" style="left:98px;top:310px" width="16" height="16"><rect x="1.5" y="1.5" width="13" height="13" fill="#93b1e3" stroke="#5f8bd6"/><path d="M8 3.8c1.4 0 2.3 1.1 2.3 2.6c0 1.3-0.6 2.6-1.2 3.1c2.2 0.6 3.6 1.6 4 3.7h-10.2c0.4-2.1 1.8-3.1 4-3.7c-0.6-0.5-1.2-1.8-1.2-3.1c0-1.5 0.9-2.6 2.3-2.6z" fill="#eef3fb"/></svg>
<div class="abs" style="left:117px;top:310px;font-size:11.6px;line-height:16px;color:#222;white-space:nowrap">1 _class_lookupMethodAndLoadCache3</div>
<svg class="abs" style="left:98px;top:330px" width="16" height="16"><rect x="1.5" y="1.5" width="13" height="13" fill="#93b1e3" stroke="#5f8bd6"/><path d="M8 3.8c1.4 0 2.3 1.1 2.3 2.6c0 1.3-0.6 2.6-1.2 3.1c2.2 0.6 3.6 1.6 4 3.7h-10.2c0.4-2.1 1.8-3.1 4-3.7c-0.6-0.5-1.2-1.8-1.2-3.1c0-1.5 0.9-2.6 2.3-2.6z" fill="#eef3fb"/></svg>
<div class="abs" style="left:117px;top:330px;font-size:11.6px;line-height:16px;color:#222;white-space:nowrap">2 objc_msgSend</div>
<svg class="abs" style="left:98px;top:350px" width="16" height="16"><rect x="1.5" y="1.5" width="13" height="13" fill="#93b1e3" stroke="#5f8bd6"/><path d="M8 3.8c1.4 0 2.3 1.1 2.3 2.6c0 1.3-0.6 2.6-1.2 3.1c2.2 0.6 3.6 1.6 4 3.7h-10.2c0.4-2.1 1.8-3.1 4-3.7c-0.6-0.5-1.2-1.8-1.2-3.1c0-1.5 0.9-2.6 2.3-2.6z" fill="#eef3fb"/></svg>
<div class="abs" style="left:117px;top:350px;font-size:11.6px;line-height:16px;color:#222;white-space:nowrap">3 main</div>
<svg class="abs" style="left:98px;top:370px" width="16" height="16"><rect x="1.5" y="1.5" width="13" height="13" fill="#d2c59f" stroke="#bba672"/><rect x="7.2" y="2.6" width="1.6" height="2" fill="#fff" transform="rotate(0 8 8)"/><rect x="7.2" y="2.6" width="1.6" height="2" fill="#fff" transform="rotate(45 8 8)"/><rect x="7.2" y="2.6" width="1.6" height="2" fill="#fff" transform="rotate(90 8 8)"/><rect x="7.2" y="2.6" width="1.6" height="2" fill="#fff" transform="rotate(135 8 8)"/><rect x="7.2" y="2.6" width="1.6" height="2" fill="#fff" transform="rotate(180 8 8)"/><rect x="7.2" y="2.6" width="1.6" height="2" fill="#fff" transform="rotate(225 8 8)"/><rect x="7.2" y="2.6" width="1.6" height="2" fill="#fff" transform="rotate(270 8 8)"/><rect x="7.2" y="2.6" width="1.6" height="2" fill="#fff" transform="rotate(315 8 8)"/><circle cx="8" cy="8" r="3.6" fill="#fff"/><circle cx="8" cy="8" r="1.8" fill="#c7b688"/></svg>
<div class="abs" style="left:117px;top:370px;font-size:11.6px;line-height:16px;color:#222;white-space:nowrap">4 start</div>
</div>
</body></html>
